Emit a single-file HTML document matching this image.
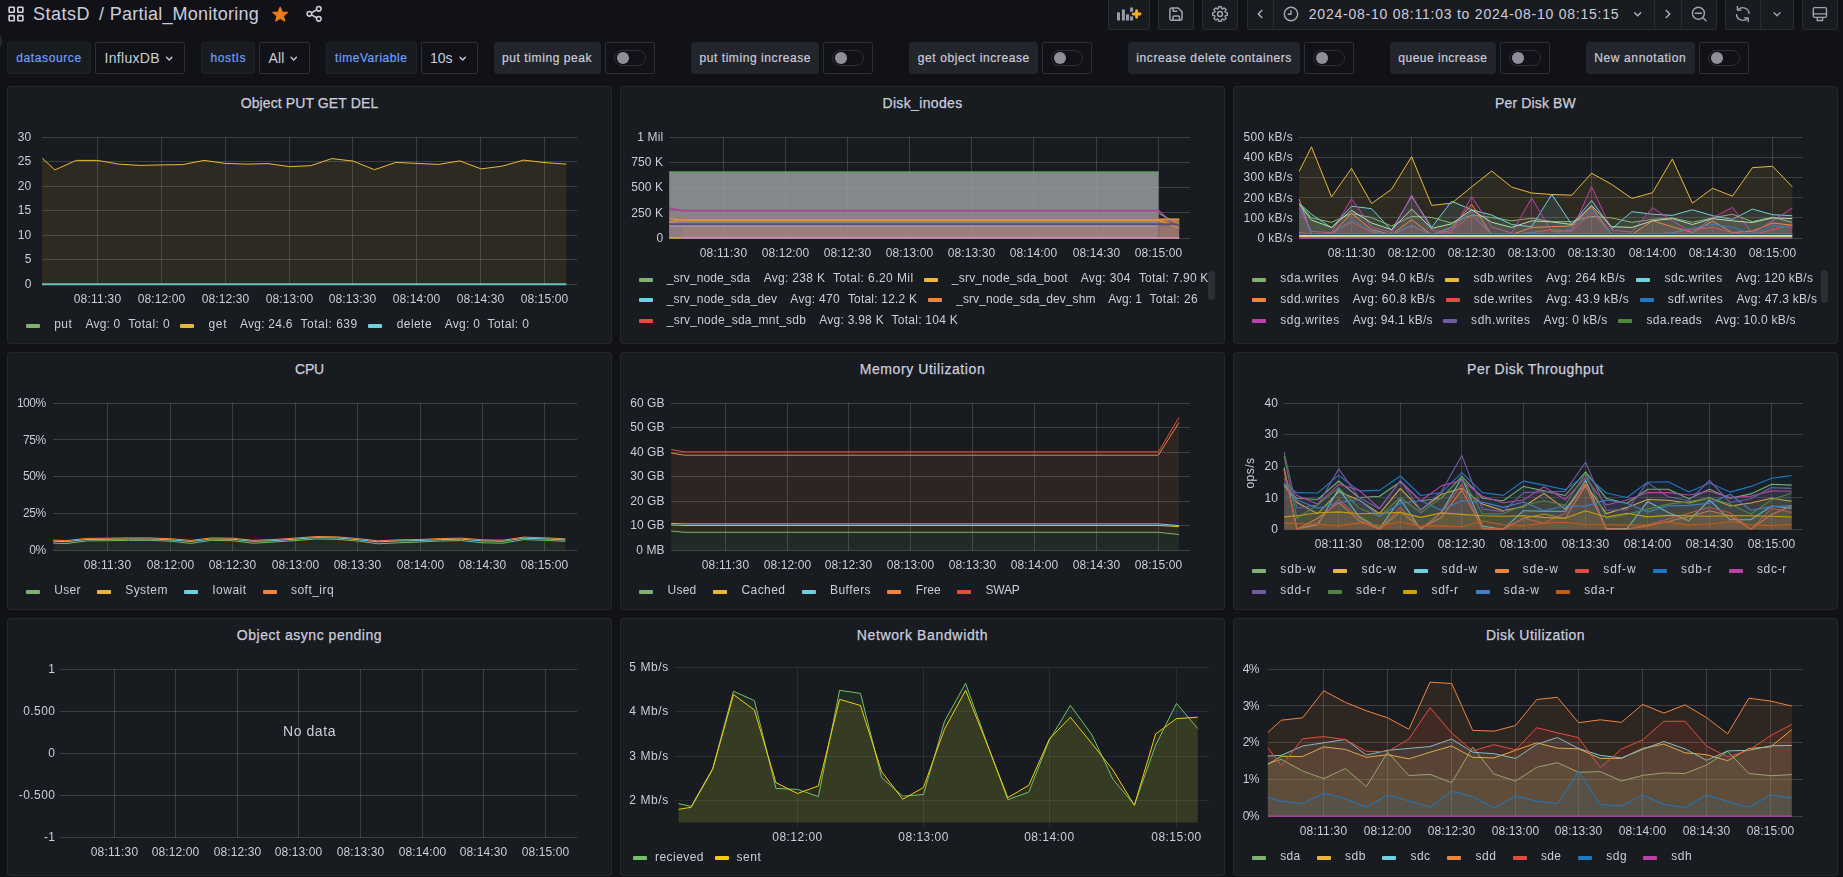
<!DOCTYPE html>
<html><head><meta charset="utf-8"><title>StatsD / Partial_Monitoring</title>
<style>
html,body{margin:0;padding:0;background:#111217;}
body{width:1843px;height:877px;overflow:hidden;position:relative;font-family:"Liberation Sans",sans-serif;color:#ccccdc;}
#gs{position:absolute;left:0;top:0;width:1843px;height:877px;will-change:transform;z-index:5;}
.t{position:absolute;white-space:nowrap;z-index:3;}
.p{position:absolute;background:#181b1f;border:1px solid #25272c;border-radius:3px;z-index:1;}
.sw{position:absolute;height:4px;border-radius:1px;z-index:3;}
.b{position:absolute;box-sizing:border-box;z-index:1;}
svg.main{position:absolute;left:0;top:0;z-index:2;}
svg.ic{position:absolute;z-index:3;overflow:visible;}
</style></head><body>
<div class="b" style="left:1108.0px;top:-2px;width:42.0px;height:32px;background:#181b1f;border:1px solid #2a2c32;border-radius:2px"></div>
<div class="b" style="left:1158.0px;top:-2px;width:36.0px;height:32px;background:#181b1f;border:1px solid #2a2c32;border-radius:2px"></div>
<div class="b" style="left:1202.0px;top:-2px;width:36.0px;height:32px;background:#181b1f;border:1px solid #2a2c32;border-radius:2px"></div>
<div class="b" style="left:1247.0px;top:-2px;width:470.0px;height:32px;background:#181b1f;border:1px solid #2a2c32;border-radius:2px"></div>
<div class="b" style="left:1725.0px;top:-2px;width:69.0px;height:32px;background:#181b1f;border:1px solid #2a2c32;border-radius:2px"></div>
<div class="b" style="left:1802.0px;top:-2px;width:36.0px;height:32px;background:#181b1f;border:1px solid #2a2c32;border-radius:2px"></div>
<div class="b" style="left:7.0px;top:42px;width:84.0px;height:32px;background:#181b1f;border:1px solid #202226;border-radius:2px"></div>
<div class="b" style="left:95.0px;top:42px;width:90.0px;height:32px;background:#111217;border:1px solid #2c2e33;border-radius:2px"></div>
<div class="b" style="left:201.0px;top:42px;width:54.0px;height:32px;background:#181b1f;border:1px solid #202226;border-radius:2px"></div>
<div class="b" style="left:259.0px;top:42px;width:51.0px;height:32px;background:#111217;border:1px solid #2c2e33;border-radius:2px"></div>
<div class="b" style="left:326.0px;top:42px;width:91.0px;height:32px;background:#181b1f;border:1px solid #202226;border-radius:2px"></div>
<div class="b" style="left:421.0px;top:42px;width:57.0px;height:32px;background:#111217;border:1px solid #2c2e33;border-radius:2px"></div>
<div class="b" style="left:494.0px;top:42px;width:107.0px;height:32px;background:#22252b;border:1px solid #22252b;border-radius:3px"></div>
<div class="b" style="left:605.0px;top:42px;width:50.0px;height:32px;background:#111217;border:1px solid #2c2e33;border-radius:2px"></div>
<div class="b" style="left:691.0px;top:42px;width:128.0px;height:32px;background:#22252b;border:1px solid #22252b;border-radius:3px"></div>
<div class="b" style="left:823.0px;top:42px;width:50.0px;height:32px;background:#111217;border:1px solid #2c2e33;border-radius:2px"></div>
<div class="b" style="left:909.0px;top:42px;width:129.0px;height:32px;background:#22252b;border:1px solid #22252b;border-radius:3px"></div>
<div class="b" style="left:1042.0px;top:42px;width:50.0px;height:32px;background:#111217;border:1px solid #2c2e33;border-radius:2px"></div>
<div class="b" style="left:1128.0px;top:42px;width:172.0px;height:32px;background:#22252b;border:1px solid #22252b;border-radius:3px"></div>
<div class="b" style="left:1304.0px;top:42px;width:50.0px;height:32px;background:#111217;border:1px solid #2c2e33;border-radius:2px"></div>
<div class="b" style="left:1390.0px;top:42px;width:106.0px;height:32px;background:#22252b;border:1px solid #22252b;border-radius:3px"></div>
<div class="b" style="left:1500.0px;top:42px;width:50.0px;height:32px;background:#111217;border:1px solid #2c2e33;border-radius:2px"></div>
<div class="b" style="left:1586.0px;top:42px;width:109.0px;height:32px;background:#22252b;border:1px solid #22252b;border-radius:3px"></div>
<div class="b" style="left:1699.0px;top:42px;width:50.0px;height:32px;background:#111217;border:1px solid #2c2e33;border-radius:2px"></div>
<div class="p" style="left:7px;top:86px;width:603px;height:256px"></div>
<div class="sw" style="left:26px;top:324px;width:14px;background:#7EB26D"></div>
<div class="sw" style="left:180px;top:324px;width:14px;background:#EAB839"></div>
<div class="sw" style="left:368px;top:324px;width:14px;background:#6ED0E0"></div>
<div class="p" style="left:620px;top:86px;width:603px;height:256px"></div>
<div class="sw" style="left:639px;top:278px;width:14px;background:#7EB26D"></div>
<div class="sw" style="left:924px;top:278px;width:14px;background:#EAB839"></div>
<div class="sw" style="left:639px;top:298px;width:14px;background:#6ED0E0"></div>
<div class="sw" style="left:928px;top:298px;width:14px;background:#EF843C"></div>
<div class="sw" style="left:639px;top:319px;width:14px;background:#E24D42"></div>
<div class="b" style="left:1208.3px;top:270.8px;width:7px;height:29px;background:#2c2e33;border-radius:4px;z-index:4"></div>
<div class="p" style="left:1233px;top:86px;width:603px;height:256px"></div>
<div class="sw" style="left:1252px;top:278px;width:14px;background:#7EB26D"></div>
<div class="sw" style="left:1445px;top:278px;width:14px;background:#EAB839"></div>
<div class="sw" style="left:1636px;top:278px;width:14px;background:#6ED0E0"></div>
<div class="sw" style="left:1252px;top:298px;width:14px;background:#EF843C"></div>
<div class="sw" style="left:1446px;top:298px;width:14px;background:#E24D42"></div>
<div class="sw" style="left:1640px;top:298px;width:14px;background:#1F78C1"></div>
<div class="sw" style="left:1252px;top:319px;width:14px;background:#BA43A9"></div>
<div class="sw" style="left:1443px;top:319px;width:14px;background:#705DA0"></div>
<div class="sw" style="left:1618px;top:319px;width:14px;background:#508642"></div>
<div class="b" style="left:1821.3px;top:270.2px;width:7px;height:33px;background:#2c2e33;border-radius:4px;z-index:4"></div>
<div class="p" style="left:7px;top:352px;width:603px;height:256px"></div>
<div class="sw" style="left:26px;top:590px;width:14px;background:#7EB26D"></div>
<div class="sw" style="left:97px;top:590px;width:14px;background:#EAB839"></div>
<div class="sw" style="left:184px;top:590px;width:14px;background:#6ED0E0"></div>
<div class="sw" style="left:263px;top:590px;width:14px;background:#EF843C"></div>
<div class="p" style="left:620px;top:352px;width:603px;height:256px"></div>
<div class="sw" style="left:639px;top:590px;width:14px;background:#7EB26D"></div>
<div class="sw" style="left:713px;top:590px;width:14px;background:#EAB839"></div>
<div class="sw" style="left:802px;top:590px;width:14px;background:#6ED0E0"></div>
<div class="sw" style="left:887px;top:590px;width:14px;background:#EF843C"></div>
<div class="sw" style="left:957px;top:590px;width:14px;background:#E24D42"></div>
<div class="p" style="left:1233px;top:352px;width:603px;height:256px"></div>
<div class="sw" style="left:1252px;top:569px;width:14px;background:#7EB26D"></div>
<div class="sw" style="left:1333px;top:569px;width:14px;background:#EAB839"></div>
<div class="sw" style="left:1414px;top:569px;width:14px;background:#6ED0E0"></div>
<div class="sw" style="left:1495px;top:569px;width:14px;background:#EF843C"></div>
<div class="sw" style="left:1575px;top:569px;width:14px;background:#E24D42"></div>
<div class="sw" style="left:1653px;top:569px;width:14px;background:#1F78C1"></div>
<div class="sw" style="left:1729px;top:569px;width:14px;background:#BA43A9"></div>
<div class="sw" style="left:1252px;top:590px;width:14px;background:#705DA0"></div>
<div class="sw" style="left:1328px;top:590px;width:14px;background:#508642"></div>
<div class="sw" style="left:1403px;top:590px;width:14px;background:#CCA300"></div>
<div class="sw" style="left:1476px;top:590px;width:14px;background:#447EBC"></div>
<div class="sw" style="left:1556px;top:590px;width:14px;background:#C15C17"></div>
<div class="p" style="left:7px;top:618px;width:603px;height:256px"></div>
<div class="p" style="left:620px;top:618px;width:603px;height:256px"></div>
<div class="sw" style="left:633px;top:856px;width:14px;background:#73BF69"></div>
<div class="sw" style="left:715px;top:856px;width:14px;background:#F2CC0C"></div>
<div class="p" style="left:1233px;top:618px;width:603px;height:256px"></div>
<div class="sw" style="left:1252px;top:856px;width:14px;background:#7EB26D"></div>
<div class="sw" style="left:1317px;top:856px;width:14px;background:#EAB839"></div>
<div class="sw" style="left:1382px;top:856px;width:14px;background:#6ED0E0"></div>
<div class="sw" style="left:1447px;top:856px;width:14px;background:#EF843C"></div>
<div class="sw" style="left:1513px;top:856px;width:14px;background:#E24D42"></div>
<div class="sw" style="left:1578px;top:856px;width:14px;background:#1F78C1"></div>
<div class="sw" style="left:1643px;top:856px;width:14px;background:#BA43A9"></div>
<div class="b" style="left:-22px;top:29px;width:24px;height:24px;border-radius:50%;background:#24272e;border:1px solid #2c2f36"></div>
<svg class="main" width="1843" height="877" viewBox="0 0 1843 877">
<rect x="9.15" y="7.2" width="5.1" height="5.1" rx="0.5" fill="none" stroke="#d0d0de" stroke-width="1.65"/>
<rect x="17.8" y="7.2" width="5.1" height="5.1" rx="0.5" fill="none" stroke="#d0d0de" stroke-width="1.65"/>
<rect x="9.15" y="15.65" width="5.1" height="5.1" rx="0.5" fill="none" stroke="#d0d0de" stroke-width="1.65"/>
<rect x="17.8" y="15.65" width="5.1" height="5.1" rx="0.5" fill="none" stroke="#d0d0de" stroke-width="1.65"/>
<polygon points="280.20,7.20 282.20,12.05 287.43,12.45 283.43,15.85 284.67,20.95 280.20,18.20 275.73,20.95 276.97,15.85 272.97,12.45 278.20,12.05" fill="#eb7b18" stroke="#eb7b18" stroke-width="1.2" stroke-linejoin="round"/>
<g fill="none" stroke="#ccccdc" stroke-width="1.55"><circle cx="318.8" cy="8.8" r="2.3"/><circle cx="318.8" cy="18.8" r="2.3"/><circle cx="309.4" cy="13.8" r="2.3"/><line x1="311.5" y1="12.700000000000001" x2="316.7" y2="9.9"/><line x1="311.5" y1="14.9" x2="316.7" y2="17.7"/></g>
<line x1="1273.50" y1="-2.00" x2="1273.50" y2="29.00" stroke="#2a2c32" stroke-width="1"/>
<line x1="1654.50" y1="-2.00" x2="1654.50" y2="29.00" stroke="#2a2c32" stroke-width="1"/>
<line x1="1681.50" y1="-2.00" x2="1681.50" y2="29.00" stroke="#2a2c32" stroke-width="1"/>
<line x1="1760.50" y1="-2.00" x2="1760.50" y2="29.00" stroke="#2a2c32" stroke-width="1"/>
<rect x="1117.0" y="12.2" width="3.0" height="8.3" fill="#9a9aa8" rx="0.3"/>
<rect x="1121.9" y="9.5" width="3.0" height="11.0" fill="#9a9aa8" rx="0.3"/>
<rect x="1126.0" y="14.3" width="3.0" height="6.2" fill="#9a9aa8" rx="0.3"/>
<rect x="1130.1" y="7.4" width="3.0" height="13.1" fill="#9a9aa8" rx="0.3"/>
<path d="M1132.1999999999998,14.0 H1141.0 M1136.6,9.7 V18.3" stroke="#181b1f" stroke-width="5.2" stroke-linecap="round" fill="none"/>
<path d="M1133.1999999999998,14.0 H1140.0 M1136.6,10.7 V17.3" stroke="#f7a928" stroke-width="2.9" stroke-linecap="round" fill="none"/>
<g fill="none" stroke="#a2a2b0" stroke-width="1.5" stroke-linejoin="round"><path d="M1169.9,9.7 a1.7,1.7 0 0 1 1.7,-1.7 h6.6 l3.9,3.9 v6.6 a1.7,1.7 0 0 1 -1.7,1.7 h-8.8 a1.7,1.7 0 0 1 -1.7,-1.7 z"/><path d="M1173.1,20.1 v-3.4 a0.8,0.8 0 0 1 0.8,-0.8 h4.8 a0.8,0.8 0 0 1 0.8,0.8 v3.4"/><path d="M1173.1,8.1 v2.6 a0.6,0.6 0 0 0 0.6,0.6 h3.6"/></g>
<polygon points="1227.27,12.60 1227.27,15.40 1225.35,15.65 1224.95,16.61 1226.13,18.15 1224.15,20.13 1222.61,18.95 1221.65,19.35 1221.40,21.27 1218.60,21.27 1218.35,19.35 1217.39,18.95 1215.85,20.13 1213.87,18.15 1215.05,16.61 1214.65,15.65 1212.73,15.40 1212.73,12.60 1214.65,12.35 1215.05,11.39 1213.87,9.85 1215.85,7.87 1217.39,9.05 1218.35,8.65 1218.60,6.73 1221.40,6.73 1221.65,8.65 1222.61,9.05 1224.15,7.87 1226.13,9.85 1224.95,11.39 1225.35,12.35" fill="none" stroke="#a2a2b0" stroke-width="1.4" stroke-linejoin="round"/>
<circle cx="1220" cy="14" r="2.5" fill="none" stroke="#a2a2b0" stroke-width="1.4"/>
<polyline points="1261.8,10.4 1258.2,14 1261.8,17.6" fill="none" stroke="#b4b4c2" stroke-width="1.4" stroke-linecap="round" stroke-linejoin="round"/>
<circle cx="1291" cy="14" r="6.7" fill="none" stroke="#a8a8b6" stroke-width="1.4"/>
<polyline points="1291,10.6 1291,14.3 1288.2,14.3" fill="none" stroke="#a8a8b6" stroke-width="1.4" stroke-linecap="round" stroke-linejoin="round"/>
<polyline points="1634.6,12.7 1637.6,15.7 1640.6,12.7" fill="none" stroke="#b4b4c2" stroke-width="1.4" stroke-linecap="round" stroke-linejoin="round"/>
<polyline points="1666.2,10.4 1669.8,14 1666.2,17.6" fill="none" stroke="#b4b4c2" stroke-width="1.4" stroke-linecap="round" stroke-linejoin="round"/>
<circle cx="1698.4" cy="13.2" r="6.0" fill="none" stroke="#a2a2b0" stroke-width="1.4"/>
<line x1="1702.9" y1="17.7" x2="1706.0" y2="20.7" stroke="#a2a2b0" stroke-width="1.4" stroke-linecap="round"/>
<line x1="1695.4" y1="13.2" x2="1701.4" y2="13.2" stroke="#a2a2b0" stroke-width="1.4" stroke-linecap="round"/>
<g fill="none" stroke="#a2a2b0" stroke-width="1.4" stroke-linecap="round" stroke-linejoin="round"><path d="M1749.1,13.4 A6.3,6.3 0 0 0 1738.3,9.6"/><polyline points="1737.3999999999999,6.4 1737.3999999999999,10.1 1741.1,10.1"/><path d="M1736.5,14.6 A6.3,6.3 0 0 0 1747.3,18.4"/><polyline points="1748.2,21.6 1748.2,17.9 1744.5,17.9"/></g>
<polyline points="1774.0,12.7 1777,15.7 1780.0,12.7" fill="none" stroke="#a2a2b0" stroke-width="1.4" stroke-linecap="round" stroke-linejoin="round"/>
<g fill="none" stroke="#a2a2b0" stroke-width="1.4" stroke-linejoin="round" stroke-linecap="round"><rect x="1813.3" y="7.6" width="13.2" height="9.8" rx="1.4"/><line x1="1813.3" y1="13.9" x2="1826.5" y2="13.9"/><path d="M1817.2,17.6 v2.9 h5.4 v-2.9"/></g>
<polyline points="166.5,57.25 169.2,59.95 171.89999999999998,57.25" fill="none" stroke="#ccccdc" stroke-width="1.3" stroke-linecap="round" stroke-linejoin="round"/>
<polyline points="291.0,57.25 293.7,59.95 296.4,57.25" fill="none" stroke="#ccccdc" stroke-width="1.3" stroke-linecap="round" stroke-linejoin="round"/>
<polyline points="460.0,57.25 462.7,59.95 465.4,57.25" fill="none" stroke="#ccccdc" stroke-width="1.3" stroke-linecap="round" stroke-linejoin="round"/>
<rect x="614.5" y="50.5" width="31" height="15" rx="7.5" fill="#111217" stroke="#2d2f36" stroke-width="1"/>
<circle cx="623.0" cy="58" r="6.05" fill="#8f8f9c"/>
<rect x="832.5" y="50.5" width="31" height="15" rx="7.5" fill="#111217" stroke="#2d2f36" stroke-width="1"/>
<circle cx="841.0" cy="58" r="6.05" fill="#8f8f9c"/>
<rect x="1051.5" y="50.5" width="31" height="15" rx="7.5" fill="#111217" stroke="#2d2f36" stroke-width="1"/>
<circle cx="1060.0" cy="58" r="6.05" fill="#8f8f9c"/>
<rect x="1313.5" y="50.5" width="31" height="15" rx="7.5" fill="#111217" stroke="#2d2f36" stroke-width="1"/>
<circle cx="1322.0" cy="58" r="6.05" fill="#8f8f9c"/>
<rect x="1509.5" y="50.5" width="31" height="15" rx="7.5" fill="#111217" stroke="#2d2f36" stroke-width="1"/>
<circle cx="1518.0" cy="58" r="6.05" fill="#8f8f9c"/>
<rect x="1708.5" y="50.5" width="31" height="15" rx="7.5" fill="#111217" stroke="#2d2f36" stroke-width="1"/>
<circle cx="1717.0" cy="58" r="6.05" fill="#8f8f9c"/>
<line x1="42.00" y1="137.50" x2="577.00" y2="137.50" stroke="#fff" stroke-width="1" stroke-opacity="0.155"/>
<line x1="42.00" y1="161.50" x2="577.00" y2="161.50" stroke="#fff" stroke-width="1" stroke-opacity="0.155"/>
<line x1="42.00" y1="186.50" x2="577.00" y2="186.50" stroke="#fff" stroke-width="1" stroke-opacity="0.155"/>
<line x1="42.00" y1="210.50" x2="577.00" y2="210.50" stroke="#fff" stroke-width="1" stroke-opacity="0.155"/>
<line x1="42.00" y1="235.50" x2="577.00" y2="235.50" stroke="#fff" stroke-width="1" stroke-opacity="0.155"/>
<line x1="42.00" y1="259.50" x2="577.00" y2="259.50" stroke="#fff" stroke-width="1" stroke-opacity="0.155"/>
<line x1="42.00" y1="284.50" x2="577.00" y2="284.50" stroke="#fff" stroke-width="1" stroke-opacity="0.155"/>
<line x1="97.50" y1="137.00" x2="97.50" y2="285.00" stroke="#fff" stroke-width="1" stroke-opacity="0.155"/>
<line x1="161.50" y1="137.00" x2="161.50" y2="285.00" stroke="#fff" stroke-width="1" stroke-opacity="0.155"/>
<line x1="225.50" y1="137.00" x2="225.50" y2="285.00" stroke="#fff" stroke-width="1" stroke-opacity="0.155"/>
<line x1="289.50" y1="137.00" x2="289.50" y2="285.00" stroke="#fff" stroke-width="1" stroke-opacity="0.155"/>
<line x1="352.50" y1="137.00" x2="352.50" y2="285.00" stroke="#fff" stroke-width="1" stroke-opacity="0.155"/>
<line x1="416.50" y1="137.00" x2="416.50" y2="285.00" stroke="#fff" stroke-width="1" stroke-opacity="0.155"/>
<line x1="480.50" y1="137.00" x2="480.50" y2="285.00" stroke="#fff" stroke-width="1" stroke-opacity="0.155"/>
<line x1="544.50" y1="137.00" x2="544.50" y2="285.00" stroke="#fff" stroke-width="1" stroke-opacity="0.155"/>
<polygon points="42.2,158.1 54.9,169.9 76.2,160.4 97.5,160.4 118.8,164.1 140.1,165.4 161.4,164.9 182.7,164.6 204.1,160.4 225.4,163.4 246.7,164.1 268.0,163.6 289.3,166.6 310.6,165.7 331.9,158.6 353.2,161.1 374.5,169.7 395.8,162.4 417.1,163.4 438.5,164.4 459.8,160.9 481.1,168.9 502.4,166.1 523.7,160.1 545.0,162.6 566.3,164.1 566.3,284.5 42.2,284.5" fill="#EAB839" fill-opacity="0.1"/>
<polyline points="42.2,158.1 54.9,169.9 76.2,160.4 97.5,160.4 118.8,164.1 140.1,165.4 161.4,164.9 182.7,164.6 204.1,160.4 225.4,163.4 246.7,164.1 268.0,163.6 289.3,166.6 310.6,165.7 331.9,158.6 353.2,161.1 374.5,169.7 395.8,162.4 417.1,163.4 438.5,164.4 459.8,160.9 481.1,168.9 502.4,166.1 523.7,160.1 545.0,162.6 566.3,164.1" fill="none" stroke="#EAB839" stroke-width="1.0" stroke-linejoin="round"/>
<line x1="42.00" y1="284.20" x2="566.32" y2="284.20" stroke="#6ebeb9" stroke-width="1.9"/>
<line x1="669.00" y1="137.50" x2="1190.00" y2="137.50" stroke="#fff" stroke-width="1" stroke-opacity="0.155"/>
<line x1="669.00" y1="162.50" x2="1190.00" y2="162.50" stroke="#fff" stroke-width="1" stroke-opacity="0.155"/>
<line x1="669.00" y1="187.50" x2="1190.00" y2="187.50" stroke="#fff" stroke-width="1" stroke-opacity="0.155"/>
<line x1="669.00" y1="212.50" x2="1190.00" y2="212.50" stroke="#fff" stroke-width="1" stroke-opacity="0.155"/>
<line x1="669.00" y1="238.50" x2="1190.00" y2="238.50" stroke="#fff" stroke-width="1" stroke-opacity="0.155"/>
<line x1="723.50" y1="137.00" x2="723.50" y2="239.00" stroke="#fff" stroke-width="1" stroke-opacity="0.155"/>
<line x1="785.50" y1="137.00" x2="785.50" y2="239.00" stroke="#fff" stroke-width="1" stroke-opacity="0.155"/>
<line x1="847.50" y1="137.00" x2="847.50" y2="239.00" stroke="#fff" stroke-width="1" stroke-opacity="0.155"/>
<line x1="909.50" y1="137.00" x2="909.50" y2="239.00" stroke="#fff" stroke-width="1" stroke-opacity="0.155"/>
<line x1="971.50" y1="137.00" x2="971.50" y2="239.00" stroke="#fff" stroke-width="1" stroke-opacity="0.155"/>
<line x1="1033.50" y1="137.00" x2="1033.50" y2="239.00" stroke="#fff" stroke-width="1" stroke-opacity="0.155"/>
<line x1="1096.50" y1="137.00" x2="1096.50" y2="239.00" stroke="#fff" stroke-width="1" stroke-opacity="0.155"/>
<line x1="1158.50" y1="137.00" x2="1158.50" y2="239.00" stroke="#fff" stroke-width="1" stroke-opacity="0.155"/>
<rect x="669.20" y="171.40" width="489.40" height="39.30" fill="#84888b"/>
<rect x="669.20" y="210.70" width="489.40" height="9.00" fill="#8c8189"/>
<rect x="669.20" y="219.70" width="489.40" height="6.30" fill="#93808a"/>
<rect x="669.20" y="225.50" width="489.40" height="1.60" fill="#a18d9e"/>
<rect x="669.20" y="227.00" width="489.40" height="11.20" fill="#9a7f7c"/>
<rect x="669.20" y="227.00" width="13.00" height="11.20" fill="#8f7b80"/>
<line x1="669.20" y1="187.50" x2="1158.60" y2="187.50" stroke="#fff" stroke-width="1" stroke-opacity="0.05"/>
<line x1="723.50" y1="173.00" x2="723.50" y2="238.00" stroke="#fff" stroke-width="1" stroke-opacity="0.045"/>
<line x1="785.50" y1="173.00" x2="785.50" y2="238.00" stroke="#fff" stroke-width="1" stroke-opacity="0.045"/>
<line x1="847.50" y1="173.00" x2="847.50" y2="238.00" stroke="#fff" stroke-width="1" stroke-opacity="0.045"/>
<line x1="909.50" y1="173.00" x2="909.50" y2="238.00" stroke="#fff" stroke-width="1" stroke-opacity="0.045"/>
<line x1="971.50" y1="173.00" x2="971.50" y2="238.00" stroke="#fff" stroke-width="1" stroke-opacity="0.045"/>
<line x1="1033.50" y1="173.00" x2="1033.50" y2="238.00" stroke="#fff" stroke-width="1" stroke-opacity="0.045"/>
<line x1="1096.50" y1="173.00" x2="1096.50" y2="238.00" stroke="#fff" stroke-width="1" stroke-opacity="0.045"/>
<polygon points="1158.6,218.4 1179.2,218.4 1179.2,238.2 1158.6,238.2" fill="#957469"/>
<polygon points="1158.6,218.4 1179.2,218.4 1179.2,222.5 1158.6,222.5" fill="#b5713f"/>
<polygon points="1158.6,222.5 1179.2,222.5 1179.2,227.0 1158.6,227.0" fill="#8d6c62"/>
<line x1="669.20" y1="172.40" x2="1158.60" y2="172.40" stroke="#62a05f" stroke-width="1.2"/>
<polyline points="669.2,208.2 682.2,210.7 1158.6,210.7 1179.2,229.6" fill="none" stroke="#a4458f" stroke-width="1.8" stroke-linejoin="round"/>
<polyline points="669.2,218.5 682.2,220.4 1158.6,220.4 1179.2,228.2" fill="none" stroke="#d9a233" stroke-width="1.2" stroke-linejoin="round"/>
<polyline points="669.2,222.5 682.2,219.6 1158.6,219.6 1179.2,219.6" fill="none" stroke="#dd8a3a" stroke-width="1.3" stroke-linejoin="round"/>
<polyline points="669.2,224.2 1158.6,224.2 1179.2,224.4" fill="none" stroke="#534c84" stroke-width="1.8" stroke-linejoin="round"/>
<polyline points="1158.6,213.5 1179.2,224.0" fill="none" stroke="#8bb374" stroke-width="0.8" stroke-linejoin="round"/>
<line x1="669.20" y1="238.00" x2="682.20" y2="238.00" stroke="#e0b43a" stroke-width="1.4"/>
<line x1="682.20" y1="238.00" x2="1179.20" y2="238.00" stroke="#dc92cb" stroke-width="1.4"/>
<line x1="1299.00" y1="137.50" x2="1803.00" y2="137.50" stroke="#fff" stroke-width="1" stroke-opacity="0.155"/>
<line x1="1299.00" y1="157.50" x2="1803.00" y2="157.50" stroke="#fff" stroke-width="1" stroke-opacity="0.155"/>
<line x1="1299.00" y1="177.50" x2="1803.00" y2="177.50" stroke="#fff" stroke-width="1" stroke-opacity="0.155"/>
<line x1="1299.00" y1="197.50" x2="1803.00" y2="197.50" stroke="#fff" stroke-width="1" stroke-opacity="0.155"/>
<line x1="1299.00" y1="217.50" x2="1803.00" y2="217.50" stroke="#fff" stroke-width="1" stroke-opacity="0.155"/>
<line x1="1299.00" y1="238.50" x2="1803.00" y2="238.50" stroke="#fff" stroke-width="1" stroke-opacity="0.155"/>
<line x1="1351.50" y1="137.00" x2="1351.50" y2="239.00" stroke="#fff" stroke-width="1" stroke-opacity="0.155"/>
<line x1="1411.50" y1="137.00" x2="1411.50" y2="239.00" stroke="#fff" stroke-width="1" stroke-opacity="0.155"/>
<line x1="1471.50" y1="137.00" x2="1471.50" y2="239.00" stroke="#fff" stroke-width="1" stroke-opacity="0.155"/>
<line x1="1531.50" y1="137.00" x2="1531.50" y2="239.00" stroke="#fff" stroke-width="1" stroke-opacity="0.155"/>
<line x1="1591.50" y1="137.00" x2="1591.50" y2="239.00" stroke="#fff" stroke-width="1" stroke-opacity="0.155"/>
<line x1="1652.50" y1="137.00" x2="1652.50" y2="239.00" stroke="#fff" stroke-width="1" stroke-opacity="0.155"/>
<line x1="1712.50" y1="137.00" x2="1712.50" y2="239.00" stroke="#fff" stroke-width="1" stroke-opacity="0.155"/>
<line x1="1772.50" y1="137.00" x2="1772.50" y2="239.00" stroke="#fff" stroke-width="1" stroke-opacity="0.155"/>
<polygon points="1299.1,203.2 1311.5,217.9 1331.5,222.3 1351.5,213.5 1371.6,217.6 1391.5,226.0 1411.6,216.4 1431.7,217.5 1451.6,223.0 1471.7,215.0 1491.7,217.5 1511.7,220.8 1531.7,218.2 1551.8,221.6 1571.8,221.6 1591.6,216.4 1611.8,217.9 1631.9,222.3 1652.5,219.4 1672.3,217.9 1692.4,222.3 1712.6,217.9 1732.4,214.2 1752.4,221.6 1772.6,217.2 1792.3,222.3 1792.3,238.5 1299.1,238.5" fill="#7EB26D" fill-opacity="0.1"/>
<polyline points="1299.1,203.2 1311.5,217.9 1331.5,222.3 1351.5,213.5 1371.6,217.6 1391.5,226.0 1411.6,216.4 1431.7,217.5 1451.6,223.0 1471.7,215.0 1491.7,217.5 1511.7,220.8 1531.7,218.2 1551.8,221.6 1571.8,221.6 1591.6,216.4 1611.8,217.9 1631.9,222.3 1652.5,219.4 1672.3,217.9 1692.4,222.3 1712.6,217.9 1732.4,214.2 1752.4,221.6 1772.6,217.2 1792.3,222.3" fill="none" stroke="#7EB26D" stroke-width="1.0" stroke-linejoin="round"/>
<polygon points="1299.1,171.5 1311.5,146.8 1331.5,196.8 1351.5,168.4 1371.6,203.5 1391.5,189.3 1411.6,156.7 1431.7,205.4 1451.6,203.2 1471.7,186.8 1491.7,171.0 1511.7,187.1 1531.7,193.0 1551.8,194.5 1571.8,195.2 1591.6,173.2 1611.8,184.5 1631.9,198.4 1652.5,192.7 1672.3,159.0 1692.4,203.2 1712.6,188.3 1732.4,196.2 1752.4,167.7 1772.6,166.3 1792.3,186.8 1792.3,238.5 1299.1,238.5" fill="#EAB839" fill-opacity="0.1"/>
<polyline points="1299.1,171.5 1311.5,146.8 1331.5,196.8 1351.5,168.4 1371.6,203.5 1391.5,189.3 1411.6,156.7 1431.7,205.4 1451.6,203.2 1471.7,186.8 1491.7,171.0 1511.7,187.1 1531.7,193.0 1551.8,194.5 1571.8,195.2 1591.6,173.2 1611.8,184.5 1631.9,198.4 1652.5,192.7 1672.3,159.0 1692.4,203.2 1712.6,188.3 1732.4,196.2 1752.4,167.7 1772.6,166.3 1792.3,186.8" fill="none" stroke="#EAB839" stroke-width="1.0" stroke-linejoin="round"/>
<polygon points="1299.1,203.2 1311.5,214.2 1331.5,227.9 1351.5,206.2 1371.6,208.7 1391.5,230.4 1411.6,196.2 1431.7,227.4 1451.6,201.3 1471.7,209.8 1491.7,215.0 1511.7,224.5 1531.7,226.7 1551.8,194.5 1571.8,224.5 1591.6,200.3 1611.8,228.9 1631.9,211.7 1652.5,214.2 1672.3,215.4 1692.4,209.8 1712.6,215.7 1732.4,219.4 1752.4,209.1 1772.6,214.7 1792.3,215.7 1792.3,238.5 1299.1,238.5" fill="#6ED0E0" fill-opacity="0.1"/>
<polyline points="1299.1,203.2 1311.5,214.2 1331.5,227.9 1351.5,206.2 1371.6,208.7 1391.5,230.4 1411.6,196.2 1431.7,227.4 1451.6,201.3 1471.7,209.8 1491.7,215.0 1511.7,224.5 1531.7,226.7 1551.8,194.5 1571.8,224.5 1591.6,200.3 1611.8,228.9 1631.9,211.7 1652.5,214.2 1672.3,215.4 1692.4,209.8 1712.6,215.7 1732.4,219.4 1752.4,209.1 1772.6,214.7 1792.3,215.7" fill="none" stroke="#6ED0E0" stroke-width="1.0" stroke-linejoin="round"/>
<polygon points="1299.1,198.9 1311.5,234.6 1331.5,234.6 1351.5,213.2 1371.6,229.6 1391.5,234.6 1411.6,219.7 1431.7,234.6 1451.6,227.4 1471.7,204.3 1491.7,234.6 1511.7,234.6 1531.7,227.4 1551.8,226.7 1571.8,226.0 1591.6,206.9 1611.8,234.6 1631.9,234.6 1652.5,220.8 1672.3,226.7 1692.4,232.5 1712.6,221.1 1732.4,232.5 1752.4,231.1 1772.6,223.0 1792.3,225.2 1792.3,238.5 1299.1,238.5" fill="#EF843C" fill-opacity="0.1"/>
<polyline points="1299.1,198.9 1311.5,234.6 1331.5,234.6 1351.5,213.2 1371.6,229.6 1391.5,234.6 1411.6,219.7 1431.7,234.6 1451.6,227.4 1471.7,204.3 1491.7,234.6 1511.7,234.6 1531.7,227.4 1551.8,226.7 1571.8,226.0 1591.6,206.9 1611.8,234.6 1631.9,234.6 1652.5,220.8 1672.3,226.7 1692.4,232.5 1712.6,221.1 1732.4,232.5 1752.4,231.1 1772.6,223.0 1792.3,225.2" fill="none" stroke="#EF843C" stroke-width="1.0" stroke-linejoin="round"/>
<polygon points="1299.1,232.5 1311.5,234.6 1331.5,232.5 1351.5,222.0 1371.6,231.8 1391.5,234.6 1411.6,226.0 1431.7,234.6 1451.6,230.4 1471.7,215.0 1491.7,234.6 1511.7,234.6 1531.7,232.5 1551.8,229.6 1571.8,231.1 1591.6,212.0 1611.8,234.6 1631.9,234.6 1652.5,234.6 1672.3,232.5 1692.4,229.6 1712.6,227.4 1732.4,232.5 1752.4,234.6 1772.6,229.6 1792.3,224.5 1792.3,238.5 1299.1,238.5" fill="#E24D42" fill-opacity="0.1"/>
<polyline points="1299.1,232.5 1311.5,234.6 1331.5,232.5 1351.5,222.0 1371.6,231.8 1391.5,234.6 1411.6,226.0 1431.7,234.6 1451.6,230.4 1471.7,215.0 1491.7,234.6 1511.7,234.6 1531.7,232.5 1551.8,229.6 1571.8,231.1 1591.6,212.0 1611.8,234.6 1631.9,234.6 1652.5,234.6 1672.3,232.5 1692.4,229.6 1712.6,227.4 1732.4,232.5 1752.4,234.6 1772.6,229.6 1792.3,224.5" fill="none" stroke="#E24D42" stroke-width="1.0" stroke-linejoin="round"/>
<polygon points="1299.1,202.5 1311.5,234.6 1331.5,234.6 1351.5,219.4 1371.6,231.1 1391.5,234.6 1411.6,225.2 1431.7,234.6 1451.6,228.2 1471.7,211.3 1491.7,234.6 1511.7,234.6 1531.7,232.5 1551.8,234.6 1571.8,228.2 1591.6,209.1 1611.8,234.6 1631.9,234.6 1652.5,234.6 1672.3,232.5 1692.4,228.2 1712.6,224.5 1732.4,227.1 1752.4,234.6 1772.6,225.2 1792.3,227.4 1792.3,238.5 1299.1,238.5" fill="#1F78C1" fill-opacity="0.1"/>
<polyline points="1299.1,202.5 1311.5,234.6 1331.5,234.6 1351.5,219.4 1371.6,231.1 1391.5,234.6 1411.6,225.2 1431.7,234.6 1451.6,228.2 1471.7,211.3 1491.7,234.6 1511.7,234.6 1531.7,232.5 1551.8,234.6 1571.8,228.2 1591.6,209.1 1611.8,234.6 1631.9,234.6 1652.5,234.6 1672.3,232.5 1692.4,228.2 1712.6,224.5 1732.4,227.1 1752.4,234.6 1772.6,225.2 1792.3,227.4" fill="none" stroke="#1F78C1" stroke-width="1.0" stroke-linejoin="round"/>
<polygon points="1299.1,207.6 1311.5,231.4 1331.5,232.5 1351.5,198.9 1371.6,227.0 1391.5,232.5 1411.6,194.9 1431.7,230.4 1451.6,232.5 1471.7,196.7 1491.7,227.0 1511.7,233.0 1531.7,198.1 1551.8,231.5 1571.8,230.8 1591.6,186.8 1611.8,230.1 1631.9,232.1 1652.5,207.6 1672.3,220.8 1692.4,232.5 1712.6,217.9 1732.4,207.4 1752.4,233.0 1772.6,220.8 1792.3,208.1 1792.3,238.5 1299.1,238.5" fill="#BA43A9" fill-opacity="0.1"/>
<polyline points="1299.1,207.6 1311.5,231.4 1331.5,232.5 1351.5,198.9 1371.6,227.0 1391.5,232.5 1411.6,194.9 1431.7,230.4 1451.6,232.5 1471.7,196.7 1491.7,227.0 1511.7,233.0 1531.7,198.1 1551.8,231.5 1571.8,230.8 1591.6,186.8 1611.8,230.1 1631.9,232.1 1652.5,207.6 1672.3,220.8 1692.4,232.5 1712.6,217.9 1732.4,207.4 1752.4,233.0 1772.6,220.8 1792.3,208.1" fill="none" stroke="#BA43A9" stroke-width="1.0" stroke-linejoin="round"/>
<polygon points="1299.1,204.0 1311.5,220.1 1331.5,227.4 1351.5,210.3 1371.6,223.0 1391.5,229.6 1411.6,209.1 1431.7,228.4 1451.6,223.8 1471.7,209.8 1491.7,222.3 1511.7,227.4 1531.7,220.8 1551.8,221.9 1571.8,224.5 1591.6,205.4 1611.8,226.7 1631.9,227.4 1652.5,220.8 1672.3,218.6 1692.4,224.5 1712.6,218.6 1732.4,220.8 1752.4,222.6 1772.6,217.9 1792.3,218.6 1792.3,238.5 1299.1,238.5" fill="#B7DBAB" fill-opacity="0.1"/>
<polyline points="1299.1,204.0 1311.5,220.1 1331.5,227.4 1351.5,210.3 1371.6,223.0 1391.5,229.6 1411.6,209.1 1431.7,228.4 1451.6,223.8 1471.7,209.8 1491.7,222.3 1511.7,227.4 1531.7,220.8 1551.8,221.9 1571.8,224.5 1591.6,205.4 1611.8,226.7 1631.9,227.4 1652.5,220.8 1672.3,218.6 1692.4,224.5 1712.6,218.6 1732.4,220.8 1752.4,222.6 1772.6,217.9 1792.3,218.6" fill="none" stroke="#B7DBAB" stroke-width="1.0" stroke-linejoin="round"/>
<line x1="1299.20" y1="233.50" x2="1792.27" y2="233.50" stroke="#b9621f" stroke-width="1.0" stroke-opacity="0.85"/>
<line x1="1299.20" y1="234.50" x2="1792.27" y2="234.50" stroke="#2a4f80" stroke-width="1.0"/>
<rect x="1299.20" y="235.00" width="493.07" height="1.00" fill="#ead3a4"/>
<rect x="1299.20" y="236.00" width="493.07" height="1.00" fill="#dcc283"/>
<rect x="1299.20" y="237.00" width="493.07" height="1.90" fill="#865a98"/>
<line x1="53.00" y1="403.50" x2="577.00" y2="403.50" stroke="#fff" stroke-width="1" stroke-opacity="0.155"/>
<line x1="53.00" y1="439.50" x2="577.00" y2="439.50" stroke="#fff" stroke-width="1" stroke-opacity="0.155"/>
<line x1="53.00" y1="476.50" x2="577.00" y2="476.50" stroke="#fff" stroke-width="1" stroke-opacity="0.155"/>
<line x1="53.00" y1="513.50" x2="577.00" y2="513.50" stroke="#fff" stroke-width="1" stroke-opacity="0.155"/>
<line x1="53.00" y1="550.50" x2="577.00" y2="550.50" stroke="#fff" stroke-width="1" stroke-opacity="0.155"/>
<line x1="107.50" y1="403.00" x2="107.50" y2="551.00" stroke="#fff" stroke-width="1" stroke-opacity="0.155"/>
<line x1="170.50" y1="403.00" x2="170.50" y2="551.00" stroke="#fff" stroke-width="1" stroke-opacity="0.155"/>
<line x1="232.50" y1="403.00" x2="232.50" y2="551.00" stroke="#fff" stroke-width="1" stroke-opacity="0.155"/>
<line x1="295.50" y1="403.00" x2="295.50" y2="551.00" stroke="#fff" stroke-width="1" stroke-opacity="0.155"/>
<line x1="357.50" y1="403.00" x2="357.50" y2="551.00" stroke="#fff" stroke-width="1" stroke-opacity="0.155"/>
<line x1="420.50" y1="403.00" x2="420.50" y2="551.00" stroke="#fff" stroke-width="1" stroke-opacity="0.155"/>
<line x1="482.50" y1="403.00" x2="482.50" y2="551.00" stroke="#fff" stroke-width="1" stroke-opacity="0.155"/>
<line x1="544.50" y1="403.00" x2="544.50" y2="551.00" stroke="#fff" stroke-width="1" stroke-opacity="0.155"/>
<polygon points="53.2,543.1 66.0,543.6 86.8,540.9 107.6,540.7 128.4,540.4 149.2,540.4 170.0,541.2 190.8,543.4 211.6,540.4 232.5,540.7 253.3,543.3 274.1,542.0 294.9,540.6 315.7,539.0 336.5,539.3 357.3,541.0 378.1,543.8 398.9,542.8 419.8,542.0 440.6,541.0 461.4,540.6 482.2,542.8 503.0,543.2 523.8,539.6 544.6,540.3 565.4,541.3 565.4,550.5 53.2,550.5" fill="#7EB26D" fill-opacity="0.1"/>
<polygon points="53.2,541.2 66.0,541.7 86.8,539.5 107.6,539.3 128.4,539.0 149.2,539.0 170.0,539.8 190.8,541.5 211.6,539.0 232.5,539.3 253.3,541.4 274.1,540.6 294.9,539.2 315.7,537.6 336.5,537.9 357.3,539.6 378.1,541.9 398.9,540.9 419.8,540.6 440.6,539.6 461.4,539.2 482.2,540.9 503.0,541.3 523.8,538.2 544.6,538.9 565.4,539.9 565.4,541.3 544.6,540.3 523.8,539.6 503.0,543.2 482.2,542.8 461.4,540.6 440.6,541.0 419.8,542.0 398.9,542.8 378.1,543.8 357.3,541.0 336.5,539.3 315.7,539.0 294.9,540.6 274.1,542.0 253.3,543.3 232.5,540.7 211.6,540.4 190.8,543.4 170.0,541.2 149.2,540.4 128.4,540.4 107.6,540.7 86.8,540.9 66.0,543.6 53.2,543.1" fill="#EAB839" fill-opacity="0.1"/>
<polygon points="53.2,541.2 66.0,541.7 86.8,539.5 107.6,539.3 128.4,539.0 149.2,539.0 170.0,539.8 190.8,541.5 211.6,539.0 232.5,539.3 253.3,541.4 274.1,540.6 294.9,539.2 315.7,537.6 336.5,537.9 357.3,539.6 378.1,541.9 398.9,540.9 419.8,540.6 440.6,539.6 461.4,539.2 482.2,540.9 503.0,541.3 523.8,538.2 544.6,538.9 565.4,539.9 565.4,539.9 544.6,538.9 523.8,538.2 503.0,541.3 482.2,540.9 461.4,539.2 440.6,539.6 419.8,540.6 398.9,540.9 378.1,541.9 357.3,539.6 336.5,537.9 315.7,537.6 294.9,539.2 274.1,540.6 253.3,541.4 232.5,539.3 211.6,539.0 190.8,541.5 170.0,539.8 149.2,539.0 128.4,539.0 107.6,539.3 86.8,539.5 66.0,541.7 53.2,541.2" fill="#6ED0E0" fill-opacity="0.1"/>
<polygon points="53.2,540.1 66.0,540.6 86.8,538.4 107.6,538.2 128.4,537.9 149.2,537.9 170.0,538.7 190.8,540.4 211.6,537.9 232.5,538.2 253.3,540.3 274.1,539.5 294.9,538.1 315.7,536.5 336.5,536.8 357.3,538.5 378.1,540.8 398.9,539.8 419.8,539.5 440.6,538.5 461.4,538.1 482.2,539.8 503.0,540.2 523.8,537.1 544.6,537.8 565.4,538.8 565.4,539.9 544.6,538.9 523.8,538.2 503.0,541.3 482.2,540.9 461.4,539.2 440.6,539.6 419.8,540.6 398.9,540.9 378.1,541.9 357.3,539.6 336.5,537.9 315.7,537.6 294.9,539.2 274.1,540.6 253.3,541.4 232.5,539.3 211.6,539.0 190.8,541.5 170.0,539.8 149.2,539.0 128.4,539.0 107.6,539.3 86.8,539.5 66.0,541.7 53.2,541.2" fill="#EF843C" fill-opacity="0.1"/>
<polyline points="53.2,543.1 66.0,543.6 86.8,540.9 107.6,540.7 128.4,540.4 149.2,540.4 170.0,541.2 190.8,543.4 211.6,540.4 232.5,540.7 253.3,543.3 274.1,542.0 294.9,540.6 315.7,539.0 336.5,539.3 357.3,541.0 378.1,543.8 398.9,542.8 419.8,542.0 440.6,541.0 461.4,540.6 482.2,542.8 503.0,543.2 523.8,539.6 544.6,540.3 565.4,541.3" fill="none" stroke="#7EB26D" stroke-width="1.0" stroke-linejoin="round"/>
<polyline points="53.2,541.2 66.0,541.7 86.8,539.5 107.6,539.3 128.4,539.0 149.2,539.0 170.0,539.8 190.8,541.5 211.6,539.0 232.5,539.3 253.3,541.4 274.1,540.6 294.9,539.2 315.7,537.6 336.5,537.9 357.3,539.6 378.1,541.9 398.9,540.9 419.8,540.6 440.6,539.6 461.4,539.2 482.2,540.9 503.0,541.3 523.8,538.2 544.6,538.9 565.4,539.9" fill="none" stroke="#6ED0E0" stroke-width="1.0" stroke-linejoin="round"/>
<polyline points="53.2,540.1 66.0,540.6 86.8,538.4 107.6,538.2 128.4,537.9 149.2,537.9 170.0,538.7 190.8,540.4 211.6,537.9 232.5,538.2 253.3,540.3 274.1,539.5 294.9,538.1 315.7,536.5 336.5,536.8 357.3,538.5 378.1,540.8 398.9,539.8 419.8,539.5 440.6,538.5 461.4,538.1 482.2,539.8 503.0,540.2 523.8,537.1 544.6,537.8 565.4,538.8" fill="none" stroke="#EF843C" stroke-width="1.0" stroke-linejoin="round"/>
<line x1="671.00" y1="403.50" x2="1190.00" y2="403.50" stroke="#fff" stroke-width="1" stroke-opacity="0.155"/>
<line x1="671.00" y1="427.50" x2="1190.00" y2="427.50" stroke="#fff" stroke-width="1" stroke-opacity="0.155"/>
<line x1="671.00" y1="452.50" x2="1190.00" y2="452.50" stroke="#fff" stroke-width="1" stroke-opacity="0.155"/>
<line x1="671.00" y1="476.50" x2="1190.00" y2="476.50" stroke="#fff" stroke-width="1" stroke-opacity="0.155"/>
<line x1="671.00" y1="501.50" x2="1190.00" y2="501.50" stroke="#fff" stroke-width="1" stroke-opacity="0.155"/>
<line x1="671.00" y1="525.50" x2="1190.00" y2="525.50" stroke="#fff" stroke-width="1" stroke-opacity="0.155"/>
<line x1="671.00" y1="550.50" x2="1190.00" y2="550.50" stroke="#fff" stroke-width="1" stroke-opacity="0.155"/>
<line x1="725.50" y1="403.00" x2="725.50" y2="551.00" stroke="#fff" stroke-width="1" stroke-opacity="0.155"/>
<line x1="787.50" y1="403.00" x2="787.50" y2="551.00" stroke="#fff" stroke-width="1" stroke-opacity="0.155"/>
<line x1="848.50" y1="403.00" x2="848.50" y2="551.00" stroke="#fff" stroke-width="1" stroke-opacity="0.155"/>
<line x1="910.50" y1="403.00" x2="910.50" y2="551.00" stroke="#fff" stroke-width="1" stroke-opacity="0.155"/>
<line x1="972.50" y1="403.00" x2="972.50" y2="551.00" stroke="#fff" stroke-width="1" stroke-opacity="0.155"/>
<line x1="1034.50" y1="403.00" x2="1034.50" y2="551.00" stroke="#fff" stroke-width="1" stroke-opacity="0.155"/>
<line x1="1096.50" y1="403.00" x2="1096.50" y2="551.00" stroke="#fff" stroke-width="1" stroke-opacity="0.155"/>
<line x1="1158.50" y1="403.00" x2="1158.50" y2="551.00" stroke="#fff" stroke-width="1" stroke-opacity="0.155"/>
<polygon points="671.2,531.0 684.1,532.3 1158.4,532.3 1179.0,534.5 1179.0,550.5 671.2,550.5" fill="#7EB26D" fill-opacity="0.1"/>
<polygon points="671.2,524.9 684.1,525.5 1158.4,525.5 1179.0,526.6 1179.0,534.5 1158.4,532.3 684.1,532.3 671.2,531.0" fill="#EAB839" fill-opacity="0.1"/>
<polygon points="671.2,523.4 684.1,523.9 1158.4,523.9 1179.0,525.6 1179.0,526.6 1158.4,525.5 684.1,525.5 671.2,524.9" fill="#6ED0E0" fill-opacity="0.1"/>
<polygon points="671.2,453.0 684.1,455.2 1158.4,455.2 1179.0,422.4 1179.0,525.6 1158.4,523.9 684.1,523.9 671.2,523.4" fill="#EF843C" fill-opacity="0.1"/>
<polygon points="671.2,449.5 684.1,451.8 1158.4,451.8 1179.0,417.3 1179.0,422.4 1158.4,455.2 684.1,455.2 671.2,453.0" fill="#E24D42" fill-opacity="0.1"/>
<polyline points="671.2,531.0 684.1,532.3 1158.4,532.3 1179.0,534.5" fill="none" stroke="#7EB26D" stroke-width="1.0" stroke-linejoin="round"/>
<polyline points="671.2,524.9 684.1,525.5 1158.4,525.5 1179.0,526.6" fill="none" stroke="#EAB839" stroke-width="1.0" stroke-linejoin="round"/>
<polyline points="671.2,523.4 684.1,523.9 1158.4,523.9 1179.0,525.6" fill="none" stroke="#6ED0E0" stroke-width="1.0" stroke-linejoin="round"/>
<polyline points="671.2,453.0 684.1,455.2 1158.4,455.2 1179.0,422.4" fill="none" stroke="#EF843C" stroke-width="1.0" stroke-linejoin="round"/>
<polyline points="671.2,449.5 684.1,451.8 1158.4,451.8 1179.0,417.3" fill="none" stroke="#E24D42" stroke-width="1.0" stroke-linejoin="round"/>
<line x1="1284.00" y1="403.50" x2="1803.00" y2="403.50" stroke="#fff" stroke-width="1" stroke-opacity="0.155"/>
<line x1="1284.00" y1="434.50" x2="1803.00" y2="434.50" stroke="#fff" stroke-width="1" stroke-opacity="0.155"/>
<line x1="1284.00" y1="466.50" x2="1803.00" y2="466.50" stroke="#fff" stroke-width="1" stroke-opacity="0.155"/>
<line x1="1284.00" y1="497.50" x2="1803.00" y2="497.50" stroke="#fff" stroke-width="1" stroke-opacity="0.155"/>
<line x1="1284.00" y1="529.50" x2="1803.00" y2="529.50" stroke="#fff" stroke-width="1" stroke-opacity="0.155"/>
<line x1="1338.50" y1="403.00" x2="1338.50" y2="530.00" stroke="#fff" stroke-width="1" stroke-opacity="0.155"/>
<line x1="1400.50" y1="403.00" x2="1400.50" y2="530.00" stroke="#fff" stroke-width="1" stroke-opacity="0.155"/>
<line x1="1461.50" y1="403.00" x2="1461.50" y2="530.00" stroke="#fff" stroke-width="1" stroke-opacity="0.155"/>
<line x1="1523.50" y1="403.00" x2="1523.50" y2="530.00" stroke="#fff" stroke-width="1" stroke-opacity="0.155"/>
<line x1="1585.50" y1="403.00" x2="1585.50" y2="530.00" stroke="#fff" stroke-width="1" stroke-opacity="0.155"/>
<line x1="1647.50" y1="403.00" x2="1647.50" y2="530.00" stroke="#fff" stroke-width="1" stroke-opacity="0.155"/>
<line x1="1709.50" y1="403.00" x2="1709.50" y2="530.00" stroke="#fff" stroke-width="1" stroke-opacity="0.155"/>
<line x1="1771.50" y1="403.00" x2="1771.50" y2="530.00" stroke="#fff" stroke-width="1" stroke-opacity="0.155"/>
<polygon points="1284.1,485.1 1297.0,498.3 1317.7,499.5 1338.7,481.0 1359.0,497.5 1379.5,496.2 1400.3,481.8 1420.8,500.8 1441.3,498.3 1461.8,476.0 1482.5,498.3 1503.2,500.8 1523.5,486.4 1544.0,490.9 1565.1,495.5 1585.6,471.9 1606.3,498.3 1627.0,503.3 1647.6,489.2 1668.3,489.2 1688.8,498.8 1709.5,489.2 1730.1,498.3 1750.8,493.9 1771.5,484.3 1791.7,485.1 1791.7,529.5 1284.1,529.5" fill="#7EB26D" fill-opacity="0.1"/>
<polyline points="1284.1,485.1 1297.0,498.3 1317.7,499.5 1338.7,481.0 1359.0,497.5 1379.5,496.2 1400.3,481.8 1420.8,500.8 1441.3,498.3 1461.8,476.0 1482.5,498.3 1503.2,500.8 1523.5,486.4 1544.0,490.9 1565.1,495.5 1585.6,471.9 1606.3,498.3 1627.0,503.3 1647.6,489.2 1668.3,489.2 1688.8,498.8 1709.5,489.2 1730.1,498.3 1750.8,493.9 1771.5,484.3 1791.7,485.1" fill="none" stroke="#7EB26D" stroke-width="1.1" stroke-linejoin="round"/>
<polygon points="1284.1,485.4 1297.0,502.5 1317.7,513.7 1338.7,491.7 1359.0,500.0 1379.5,513.7 1400.3,488.4 1420.8,509.9 1441.3,494.2 1461.8,488.4 1482.5,504.1 1503.2,510.7 1523.5,506.6 1544.0,493.4 1565.1,509.1 1585.6,484.3 1606.3,513.6 1627.0,507.4 1647.6,499.5 1668.3,500.3 1688.8,503.0 1709.5,497.8 1730.1,506.1 1750.8,503.0 1771.5,498.3 1791.7,501.2 1791.7,529.5 1284.1,529.5" fill="#EAB839" fill-opacity="0.1"/>
<polyline points="1284.1,485.4 1297.0,502.5 1317.7,513.7 1338.7,491.7 1359.0,500.0 1379.5,513.7 1400.3,488.4 1420.8,509.9 1441.3,494.2 1461.8,488.4 1482.5,504.1 1503.2,510.7 1523.5,506.6 1544.0,493.4 1565.1,509.1 1585.6,484.3 1606.3,513.6 1627.0,507.4 1647.6,499.5 1668.3,500.3 1688.8,503.0 1709.5,497.8 1730.1,506.1 1750.8,503.0 1771.5,498.3 1791.7,501.2" fill="none" stroke="#EAB839" stroke-width="1.1" stroke-linejoin="round"/>
<polygon points="1284.1,467.8 1297.0,528.9 1317.7,524.8 1338.7,488.9 1359.0,516.5 1379.5,528.6 1400.3,499.2 1420.8,529.3 1441.3,512.4 1461.8,477.7 1482.5,526.1 1503.2,529.3 1523.5,510.7 1544.0,511.2 1565.1,511.2 1585.6,480.2 1606.3,528.6 1627.0,528.6 1647.6,501.6 1668.3,512.4 1688.8,520.7 1709.5,500.0 1730.1,519.8 1750.8,519.8 1771.5,506.1 1791.7,508.3 1791.7,529.5 1284.1,529.5" fill="#6ED0E0" fill-opacity="0.06"/>
<polyline points="1284.1,467.8 1297.0,528.9 1317.7,524.8 1338.7,488.9 1359.0,516.5 1379.5,528.6 1400.3,499.2 1420.8,529.3 1441.3,512.4 1461.8,477.7 1482.5,526.1 1503.2,529.3 1523.5,510.7 1544.0,511.2 1565.1,511.2 1585.6,480.2 1606.3,528.6 1627.0,528.6 1647.6,501.6 1668.3,512.4 1688.8,520.7 1709.5,500.0 1730.1,519.8 1750.8,519.8 1771.5,506.1 1791.7,508.3" fill="none" stroke="#6ED0E0" stroke-width="1.1" stroke-linejoin="round"/>
<polygon points="1284.1,469.4 1297.0,529.3 1317.7,518.2 1338.7,502.5 1359.0,520.7 1379.5,529.3 1400.3,511.6 1420.8,528.1 1441.3,517.4 1461.8,490.1 1482.5,528.6 1503.2,529.3 1523.5,518.2 1544.0,514.0 1565.1,518.2 1585.6,485.6 1606.3,529.3 1627.0,529.3 1647.6,525.6 1668.3,521.5 1688.8,516.5 1709.5,510.7 1730.1,515.7 1750.8,529.3 1771.5,514.4 1791.7,505.8 1791.7,529.5 1284.1,529.5" fill="#EF843C" fill-opacity="0.1"/>
<polyline points="1284.1,469.4 1297.0,529.3 1317.7,518.2 1338.7,502.5 1359.0,520.7 1379.5,529.3 1400.3,511.6 1420.8,528.1 1441.3,517.4 1461.8,490.1 1482.5,528.6 1503.2,529.3 1523.5,518.2 1544.0,514.0 1565.1,518.2 1585.6,485.6 1606.3,529.3 1627.0,529.3 1647.6,525.6 1668.3,521.5 1688.8,516.5 1709.5,510.7 1730.1,515.7 1750.8,529.3 1771.5,514.4 1791.7,505.8" fill="none" stroke="#EF843C" stroke-width="1.1" stroke-linejoin="round"/>
<polygon points="1284.1,470.2 1297.0,529.3 1317.7,522.3 1338.7,499.2 1359.0,518.2 1379.5,529.3 1400.3,507.4 1420.8,528.6 1441.3,513.2 1461.8,484.3 1482.5,528.1 1503.2,529.3 1523.5,518.2 1544.0,523.1 1565.1,513.2 1585.6,482.6 1606.3,529.3 1627.0,529.3 1647.6,524.8 1668.3,519.0 1688.8,513.2 1709.5,507.4 1730.1,512.7 1750.8,529.3 1771.5,508.3 1791.7,512.4 1791.7,529.5 1284.1,529.5" fill="#E24D42" fill-opacity="0.1"/>
<polyline points="1284.1,470.2 1297.0,529.3 1317.7,522.3 1338.7,499.2 1359.0,518.2 1379.5,529.3 1400.3,507.4 1420.8,528.6 1441.3,513.2 1461.8,484.3 1482.5,528.1 1503.2,529.3 1523.5,518.2 1544.0,523.1 1565.1,513.2 1585.6,482.6 1606.3,529.3 1627.0,529.3 1647.6,524.8 1668.3,519.0 1688.8,513.2 1709.5,507.4 1730.1,512.7 1750.8,529.3 1771.5,508.3 1791.7,512.4" fill="none" stroke="#E24D42" stroke-width="1.1" stroke-linejoin="round"/>
<polygon points="1284.1,484.3 1297.0,492.6 1317.7,493.0 1338.7,475.2 1359.0,490.9 1379.5,490.4 1400.3,476.0 1420.8,495.5 1441.3,492.6 1461.8,472.7 1482.5,492.6 1503.2,495.4 1523.5,481.0 1544.0,485.1 1565.1,489.6 1585.6,474.9 1606.3,493.0 1627.0,497.5 1647.6,482.3 1668.3,481.8 1688.8,492.1 1709.5,483.0 1730.1,492.1 1750.8,486.4 1771.5,478.2 1791.7,475.5 1791.7,529.5 1284.1,529.5" fill="#1F78C1" fill-opacity="0.075"/>
<polyline points="1284.1,484.3 1297.0,492.6 1317.7,493.0 1338.7,475.2 1359.0,490.9 1379.5,490.4 1400.3,476.0 1420.8,495.5 1441.3,492.6 1461.8,472.7 1482.5,492.6 1503.2,495.4 1523.5,481.0 1544.0,485.1 1565.1,489.6 1585.6,474.9 1606.3,493.0 1627.0,497.5 1647.6,482.3 1668.3,481.8 1688.8,492.1 1709.5,483.0 1730.1,492.1 1750.8,486.4 1771.5,478.2 1791.7,475.5" fill="none" stroke="#1F78C1" stroke-width="1.1" stroke-linejoin="round"/>
<polygon points="1284.1,478.5 1297.0,495.5 1317.7,504.1 1338.7,484.3 1359.0,490.1 1379.5,508.3 1400.3,481.0 1420.8,500.8 1441.3,485.9 1461.8,480.2 1482.5,496.2 1503.2,502.8 1523.5,500.0 1544.0,486.8 1565.1,499.5 1585.6,477.7 1606.3,505.0 1627.0,500.0 1647.6,492.6 1668.3,492.6 1688.8,495.0 1709.5,491.2 1730.1,497.5 1750.8,496.2 1771.5,490.9 1791.7,491.2 1791.7,529.5 1284.1,529.5" fill="#BA43A9" fill-opacity="0.06"/>
<polyline points="1284.1,478.5 1297.0,495.5 1317.7,504.1 1338.7,484.3 1359.0,490.1 1379.5,508.3 1400.3,481.0 1420.8,500.8 1441.3,485.9 1461.8,480.2 1482.5,496.2 1503.2,502.8 1523.5,500.0 1544.0,486.8 1565.1,499.5 1585.6,477.7 1606.3,505.0 1627.0,500.0 1647.6,492.6 1668.3,492.6 1688.8,495.0 1709.5,491.2 1730.1,497.5 1750.8,496.2 1771.5,490.9 1791.7,491.2" fill="none" stroke="#BA43A9" stroke-width="1.1" stroke-linejoin="round"/>
<polygon points="1284.1,452.0 1297.0,508.3 1317.7,505.0 1338.7,468.9 1359.0,497.5 1379.5,508.8 1400.3,480.2 1420.8,510.2 1441.3,491.7 1461.8,455.4 1482.5,509.1 1503.2,511.6 1523.5,492.6 1544.0,491.7 1565.1,491.4 1585.6,462.3 1606.3,510.2 1627.0,509.6 1647.6,482.6 1668.3,496.7 1688.8,500.8 1709.5,480.5 1730.1,502.5 1750.8,498.8 1771.5,487.6 1791.7,488.4 1791.7,529.5 1284.1,529.5" fill="#705DA0" fill-opacity="0.06"/>
<polyline points="1284.1,452.0 1297.0,508.3 1317.7,505.0 1338.7,468.9 1359.0,497.5 1379.5,508.8 1400.3,480.2 1420.8,510.2 1441.3,491.7 1461.8,455.4 1482.5,509.1 1503.2,511.6 1523.5,492.6 1544.0,491.7 1565.1,491.4 1585.6,462.3 1606.3,510.2 1627.0,509.6 1647.6,482.6 1668.3,496.7 1688.8,500.8 1709.5,480.5 1730.1,502.5 1750.8,498.8 1771.5,487.6 1791.7,488.4" fill="none" stroke="#705DA0" stroke-width="1.1" stroke-linejoin="round"/>
<polygon points="1284.1,456.2 1297.0,518.2 1317.7,505.0 1338.7,487.6 1359.0,507.9 1379.5,516.5 1400.3,497.5 1420.8,512.7 1441.3,497.5 1461.8,477.2 1482.5,514.0 1503.2,513.6 1523.5,505.4 1544.0,500.8 1565.1,505.0 1585.6,473.5 1606.3,518.2 1627.0,514.4 1647.6,509.1 1668.3,504.1 1688.8,501.6 1709.5,497.8 1730.1,504.1 1750.8,514.0 1771.5,499.7 1791.7,493.0 1791.7,529.5 1284.1,529.5" fill="#508642" fill-opacity="0.1"/>
<polyline points="1284.1,456.2 1297.0,518.2 1317.7,505.0 1338.7,487.6 1359.0,507.9 1379.5,516.5 1400.3,497.5 1420.8,512.7 1441.3,497.5 1461.8,477.2 1482.5,514.0 1503.2,513.6 1523.5,505.4 1544.0,500.8 1565.1,505.0 1585.6,473.5 1606.3,518.2 1627.0,514.4 1647.6,509.1 1668.3,504.1 1688.8,501.6 1709.5,497.8 1730.1,504.1 1750.8,514.0 1771.5,499.7 1791.7,493.0" fill="none" stroke="#508642" stroke-width="1.1" stroke-linejoin="round"/>
<polygon points="1284.1,516.9 1297.0,515.7 1317.7,512.7 1338.7,511.9 1359.0,513.7 1379.5,513.2 1400.3,512.4 1420.8,517.4 1441.3,512.9 1461.8,514.4 1482.5,515.7 1503.2,516.2 1523.5,515.7 1544.0,517.4 1565.1,518.2 1585.6,510.7 1606.3,517.0 1627.0,513.2 1647.6,516.9 1668.3,515.4 1688.8,515.7 1709.5,516.2 1730.1,515.7 1750.8,515.7 1771.5,516.2 1791.7,517.0 1791.7,529.5 1284.1,529.5" fill="#CCA300" fill-opacity="0.1"/>
<polyline points="1284.1,516.9 1297.0,515.7 1317.7,512.7 1338.7,511.9 1359.0,513.7 1379.5,513.2 1400.3,512.4 1420.8,517.4 1441.3,512.9 1461.8,514.4 1482.5,515.7 1503.2,516.2 1523.5,515.7 1544.0,517.4 1565.1,518.2 1585.6,510.7 1606.3,517.0 1627.0,513.2 1647.6,516.9 1668.3,515.4 1688.8,515.7 1709.5,516.2 1730.1,515.7 1750.8,515.7 1771.5,516.2 1791.7,517.0" fill="none" stroke="#CCA300" stroke-width="1.1" stroke-linejoin="round"/>
<polygon points="1284.1,482.6 1297.0,500.0 1317.7,508.3 1338.7,502.5 1359.0,499.5 1379.5,516.5 1400.3,503.3 1420.8,500.8 1441.3,510.2 1461.8,500.8 1482.5,502.1 1503.2,507.4 1523.5,502.0 1544.0,510.7 1565.1,505.8 1585.6,506.1 1606.3,500.0 1627.0,503.3 1647.6,512.1 1668.3,505.8 1688.8,505.4 1709.5,503.3 1730.1,494.2 1750.8,510.2 1771.5,506.6 1791.7,505.4 1791.7,529.5 1284.1,529.5" fill="#447EBC" fill-opacity="0.06"/>
<polyline points="1284.1,482.6 1297.0,500.0 1317.7,508.3 1338.7,502.5 1359.0,499.5 1379.5,516.5 1400.3,503.3 1420.8,500.8 1441.3,510.2 1461.8,500.8 1482.5,502.1 1503.2,507.4 1523.5,502.0 1544.0,510.7 1565.1,505.8 1585.6,506.1 1606.3,500.0 1627.0,503.3 1647.6,512.1 1668.3,505.8 1688.8,505.4 1709.5,503.3 1730.1,494.2 1750.8,510.2 1771.5,506.6 1791.7,505.4" fill="none" stroke="#447EBC" stroke-width="1.1" stroke-linejoin="round"/>
<polygon points="1284.1,523.1 1297.0,523.5 1317.7,524.5 1338.7,525.6 1359.0,523.1 1379.5,525.6 1400.3,522.0 1420.8,526.0 1441.3,525.6 1461.8,526.8 1482.5,521.0 1503.2,524.8 1523.5,525.6 1544.0,523.1 1565.1,522.3 1585.6,524.5 1606.3,524.8 1627.0,525.1 1647.6,524.8 1668.3,522.0 1688.8,525.1 1709.5,524.0 1730.1,521.5 1750.8,524.8 1771.5,525.6 1791.7,524.5 1791.7,529.5 1284.1,529.5" fill="#C15C17" fill-opacity="0.1"/>
<polyline points="1284.1,523.1 1297.0,523.5 1317.7,524.5 1338.7,525.6 1359.0,523.1 1379.5,525.6 1400.3,522.0 1420.8,526.0 1441.3,525.6 1461.8,526.8 1482.5,521.0 1503.2,524.8 1523.5,525.6 1544.0,523.1 1565.1,522.3 1585.6,524.5 1606.3,524.8 1627.0,525.1 1647.6,524.8 1668.3,522.0 1688.8,525.1 1709.5,524.0 1730.1,521.5 1750.8,524.8 1771.5,525.6 1791.7,524.5" fill="none" stroke="#C15C17" stroke-width="1.1" stroke-linejoin="round"/>
<line x1="60.00" y1="669.50" x2="577.00" y2="669.50" stroke="#fff" stroke-width="1" stroke-opacity="0.155"/>
<line x1="60.00" y1="711.50" x2="577.00" y2="711.50" stroke="#fff" stroke-width="1" stroke-opacity="0.155"/>
<line x1="60.00" y1="753.50" x2="577.00" y2="753.50" stroke="#fff" stroke-width="1" stroke-opacity="0.155"/>
<line x1="60.00" y1="795.50" x2="577.00" y2="795.50" stroke="#fff" stroke-width="1" stroke-opacity="0.155"/>
<line x1="60.00" y1="837.50" x2="577.00" y2="837.50" stroke="#fff" stroke-width="1" stroke-opacity="0.155"/>
<line x1="114.50" y1="669.00" x2="114.50" y2="838.00" stroke="#fff" stroke-width="1" stroke-opacity="0.155"/>
<line x1="175.50" y1="669.00" x2="175.50" y2="838.00" stroke="#fff" stroke-width="1" stroke-opacity="0.155"/>
<line x1="237.50" y1="669.00" x2="237.50" y2="838.00" stroke="#fff" stroke-width="1" stroke-opacity="0.155"/>
<line x1="298.50" y1="669.00" x2="298.50" y2="838.00" stroke="#fff" stroke-width="1" stroke-opacity="0.155"/>
<line x1="360.50" y1="669.00" x2="360.50" y2="838.00" stroke="#fff" stroke-width="1" stroke-opacity="0.155"/>
<line x1="422.50" y1="669.00" x2="422.50" y2="838.00" stroke="#fff" stroke-width="1" stroke-opacity="0.155"/>
<line x1="483.50" y1="669.00" x2="483.50" y2="838.00" stroke="#fff" stroke-width="1" stroke-opacity="0.155"/>
<line x1="545.50" y1="669.00" x2="545.50" y2="838.00" stroke="#fff" stroke-width="1" stroke-opacity="0.155"/>
<line x1="674.60" y1="667.50" x2="1209.00" y2="667.50" stroke="#fff" stroke-width="1" stroke-opacity="0.08"/>
<line x1="674.60" y1="711.50" x2="1209.00" y2="711.50" stroke="#fff" stroke-width="1" stroke-opacity="0.08"/>
<line x1="674.60" y1="756.50" x2="1209.00" y2="756.50" stroke="#fff" stroke-width="1" stroke-opacity="0.08"/>
<line x1="674.60" y1="800.50" x2="1209.00" y2="800.50" stroke="#fff" stroke-width="1" stroke-opacity="0.08"/>
<line x1="797.50" y1="667.00" x2="797.50" y2="827.00" stroke="#fff" stroke-width="1" stroke-opacity="0.08"/>
<line x1="923.50" y1="667.00" x2="923.50" y2="827.00" stroke="#fff" stroke-width="1" stroke-opacity="0.08"/>
<line x1="1049.50" y1="667.00" x2="1049.50" y2="827.00" stroke="#fff" stroke-width="1" stroke-opacity="0.08"/>
<line x1="1176.50" y1="667.00" x2="1176.50" y2="827.00" stroke="#fff" stroke-width="1" stroke-opacity="0.08"/>
<polygon points="678.5,803.6 691.2,806.4 712.7,768.5 733.5,691.3 754.4,700.6 775.9,788.4 797.5,789.4 818.4,796.6 839.6,690.3 860.5,693.4 881.6,777.5 902.8,796.2 923.5,794.5 944.6,721.1 965.6,683.3 986.7,742.2 1007.8,799.7 1028.8,792.1 1049.3,740.2 1070.4,705.3 1092.0,735.0 1112.9,779.2 1134.4,804.8 1155.6,745.3 1176.5,703.4 1197.7,728.5 1197.7,822.4 678.5,822.4" fill="#73BF69" fill-opacity="0.1"/>
<polygon points="678.5,809.3 691.2,807.3 712.7,769.3 733.5,694.6 754.4,710.0 775.9,782.6 797.5,793.5 818.4,785.9 839.6,699.3 860.5,705.5 881.6,771.6 902.8,799.3 923.5,787.4 944.6,728.9 965.6,690.3 986.7,743.2 1007.8,797.6 1028.8,785.3 1049.3,739.1 1070.4,717.2 1092.0,743.7 1112.9,769.9 1134.4,805.4 1155.6,734.0 1176.5,718.6 1197.7,717.2 1197.7,822.4 678.5,822.4" fill="#F2CC0C" fill-opacity="0.1"/>
<polyline points="678.5,803.6 691.2,806.4 712.7,768.5 733.5,691.3 754.4,700.6 775.9,788.4 797.5,789.4 818.4,796.6 839.6,690.3 860.5,693.4 881.6,777.5 902.8,796.2 923.5,794.5 944.6,721.1 965.6,683.3 986.7,742.2 1007.8,799.7 1028.8,792.1 1049.3,740.2 1070.4,705.3 1092.0,735.0 1112.9,779.2 1134.4,804.8 1155.6,745.3 1176.5,703.4 1197.7,728.5" fill="none" stroke="#73BF69" stroke-width="1.0" stroke-linejoin="round"/>
<polyline points="678.5,809.3 691.2,807.3 712.7,769.3 733.5,694.6 754.4,710.0 775.9,782.6 797.5,793.5 818.4,785.9 839.6,699.3 860.5,705.5 881.6,771.6 902.8,799.3 923.5,787.4 944.6,728.9 965.6,690.3 986.7,743.2 1007.8,797.6 1028.8,785.3 1049.3,739.1 1070.4,717.2 1092.0,743.7 1112.9,769.9 1134.4,805.4 1155.6,734.0 1176.5,718.6 1197.7,717.2" fill="none" stroke="#F2CC0C" stroke-width="1.0" stroke-linejoin="round"/>
<line x1="1268.00" y1="669.50" x2="1803.00" y2="669.50" stroke="#fff" stroke-width="1" stroke-opacity="0.155"/>
<line x1="1268.00" y1="705.50" x2="1803.00" y2="705.50" stroke="#fff" stroke-width="1" stroke-opacity="0.155"/>
<line x1="1268.00" y1="742.50" x2="1803.00" y2="742.50" stroke="#fff" stroke-width="1" stroke-opacity="0.155"/>
<line x1="1268.00" y1="779.50" x2="1803.00" y2="779.50" stroke="#fff" stroke-width="1" stroke-opacity="0.155"/>
<line x1="1268.00" y1="816.50" x2="1803.00" y2="816.50" stroke="#fff" stroke-width="1" stroke-opacity="0.155"/>
<line x1="1323.50" y1="669.00" x2="1323.50" y2="817.00" stroke="#fff" stroke-width="1" stroke-opacity="0.155"/>
<line x1="1387.50" y1="669.00" x2="1387.50" y2="817.00" stroke="#fff" stroke-width="1" stroke-opacity="0.155"/>
<line x1="1451.50" y1="669.00" x2="1451.50" y2="817.00" stroke="#fff" stroke-width="1" stroke-opacity="0.155"/>
<line x1="1515.50" y1="669.00" x2="1515.50" y2="817.00" stroke="#fff" stroke-width="1" stroke-opacity="0.155"/>
<line x1="1578.50" y1="669.00" x2="1578.50" y2="817.00" stroke="#fff" stroke-width="1" stroke-opacity="0.155"/>
<line x1="1642.50" y1="669.00" x2="1642.50" y2="817.00" stroke="#fff" stroke-width="1" stroke-opacity="0.155"/>
<line x1="1706.50" y1="669.00" x2="1706.50" y2="817.00" stroke="#fff" stroke-width="1" stroke-opacity="0.155"/>
<line x1="1770.50" y1="669.00" x2="1770.50" y2="817.00" stroke="#fff" stroke-width="1" stroke-opacity="0.155"/>
<polygon points="1267.8,763.5 1281.3,759.4 1302.6,771.0 1323.7,778.6 1345.3,768.6 1366.4,786.5 1387.7,752.2 1408.9,775.5 1430.0,774.4 1451.7,782.7 1472.7,747.1 1494.0,774.0 1515.6,781.0 1536.7,767.3 1557.4,762.6 1578.6,772.3 1600.3,771.6 1621.5,781.0 1642.6,775.4 1663.9,772.9 1685.0,773.5 1706.6,765.0 1727.7,751.3 1748.9,773.5 1770.6,775.7 1791.8,774.6 1791.8,816.5 1267.8,816.5" fill="#7EB26D" fill-opacity="0.105"/>
<polyline points="1267.8,763.5 1281.3,759.4 1302.6,771.0 1323.7,778.6 1345.3,768.6 1366.4,786.5 1387.7,752.2 1408.9,775.5 1430.0,774.4 1451.7,782.7 1472.7,747.1 1494.0,774.0 1515.6,781.0 1536.7,767.3 1557.4,762.6 1578.6,772.3 1600.3,771.6 1621.5,781.0 1642.6,775.4 1663.9,772.9 1685.0,773.5 1706.6,765.0 1727.7,751.3 1748.9,773.5 1770.6,775.7 1791.8,774.6" fill="none" stroke="#7EB26D" stroke-width="1.0" stroke-linejoin="round"/>
<polygon points="1267.8,764.4 1281.3,756.3 1302.6,756.5 1323.7,746.9 1345.3,749.4 1366.4,757.3 1387.7,754.7 1408.9,758.8 1430.0,752.2 1451.7,746.0 1472.7,757.3 1494.0,757.9 1515.6,750.3 1536.7,742.8 1557.4,748.1 1578.6,748.8 1600.3,758.4 1621.5,758.4 1642.6,748.4 1663.9,744.1 1685.0,752.8 1706.6,754.7 1727.7,760.7 1748.9,748.4 1770.6,746.9 1791.8,729.6 1791.8,816.5 1267.8,816.5" fill="#EAB839" fill-opacity="0.105"/>
<polyline points="1267.8,764.4 1281.3,756.3 1302.6,756.5 1323.7,746.9 1345.3,749.4 1366.4,757.3 1387.7,754.7 1408.9,758.8 1430.0,752.2 1451.7,746.0 1472.7,757.3 1494.0,757.9 1515.6,750.3 1536.7,742.8 1557.4,748.1 1578.6,748.8 1600.3,758.4 1621.5,758.4 1642.6,748.4 1663.9,744.1 1685.0,752.8 1706.6,754.7 1727.7,760.7 1748.9,748.4 1770.6,746.9 1791.8,729.6" fill="none" stroke="#EAB839" stroke-width="1.0" stroke-linejoin="round"/>
<polygon points="1267.8,756.0 1281.3,755.4 1302.6,746.0 1323.7,742.8 1345.3,739.4 1366.4,755.0 1387.7,750.3 1408.9,748.4 1430.0,746.6 1451.7,739.0 1472.7,752.2 1494.0,753.7 1515.6,758.4 1536.7,744.3 1557.4,737.5 1578.6,748.4 1600.3,755.4 1621.5,757.9 1642.6,749.4 1663.9,741.5 1685.0,748.8 1706.6,760.3 1727.7,750.9 1748.9,750.3 1770.6,745.8 1791.8,745.4 1791.8,816.5 1267.8,816.5" fill="#6ED0E0" fill-opacity="0.105"/>
<polyline points="1267.8,756.0 1281.3,755.4 1302.6,746.0 1323.7,742.8 1345.3,739.4 1366.4,755.0 1387.7,750.3 1408.9,748.4 1430.0,746.6 1451.7,739.0 1472.7,752.2 1494.0,753.7 1515.6,758.4 1536.7,744.3 1557.4,737.5 1578.6,748.4 1600.3,755.4 1621.5,757.9 1642.6,749.4 1663.9,741.5 1685.0,748.8 1706.6,760.3 1727.7,750.9 1748.9,750.3 1770.6,745.8 1791.8,745.4" fill="none" stroke="#6ED0E0" stroke-width="1.0" stroke-linejoin="round"/>
<polygon points="1267.8,732.5 1281.3,720.2 1302.6,717.8 1323.7,690.7 1345.3,702.3 1366.4,710.8 1387.7,717.8 1408.9,729.3 1430.0,682.2 1451.7,683.5 1472.7,730.4 1494.0,731.1 1515.6,725.5 1536.7,699.5 1557.4,697.3 1578.6,722.7 1600.3,719.8 1621.5,722.3 1642.6,704.4 1663.9,713.1 1685.0,704.8 1706.6,717.6 1727.7,733.8 1748.9,698.2 1770.6,701.0 1791.8,706.1 1791.8,816.5 1267.8,816.5" fill="#EF843C" fill-opacity="0.105"/>
<polyline points="1267.8,732.5 1281.3,720.2 1302.6,717.8 1323.7,690.7 1345.3,702.3 1366.4,710.8 1387.7,717.8 1408.9,729.3 1430.0,682.2 1451.7,683.5 1472.7,730.4 1494.0,731.1 1515.6,725.5 1536.7,699.5 1557.4,697.3 1578.6,722.7 1600.3,719.8 1621.5,722.3 1642.6,704.4 1663.9,713.1 1685.0,704.8 1706.6,717.6 1727.7,733.8 1748.9,698.2 1770.6,701.0 1791.8,706.1" fill="none" stroke="#EF843C" stroke-width="1.0" stroke-linejoin="round"/>
<polygon points="1267.8,747.5 1281.3,765.8 1302.6,738.7 1323.7,736.6 1345.3,739.6 1366.4,751.3 1387.7,751.6 1408.9,739.0 1430.0,707.6 1451.7,733.0 1472.7,750.9 1494.0,744.7 1515.6,749.8 1536.7,727.7 1557.4,732.8 1578.6,737.7 1600.3,767.6 1621.5,749.0 1642.6,740.0 1663.9,721.3 1685.0,721.2 1706.6,746.2 1727.7,756.9 1748.9,750.3 1770.6,735.6 1791.8,724.4 1791.8,816.5 1267.8,816.5" fill="#E24D42" fill-opacity="0.105"/>
<polyline points="1267.8,747.5 1281.3,765.8 1302.6,738.7 1323.7,736.6 1345.3,739.6 1366.4,751.3 1387.7,751.6 1408.9,739.0 1430.0,707.6 1451.7,733.0 1472.7,750.9 1494.0,744.7 1515.6,749.8 1536.7,727.7 1557.4,732.8 1578.6,737.7 1600.3,767.6 1621.5,749.0 1642.6,740.0 1663.9,721.3 1685.0,721.2 1706.6,746.2 1727.7,756.9 1748.9,750.3 1770.6,735.6 1791.8,724.4" fill="none" stroke="#E24D42" stroke-width="1.0" stroke-linejoin="round"/>
<polygon points="1267.8,797.4 1281.3,801.1 1302.6,803.6 1323.7,793.2 1345.3,798.7 1366.4,807.2 1387.7,794.9 1408.9,800.8 1430.0,807.2 1451.7,791.2 1472.7,796.8 1494.0,807.9 1515.6,796.2 1536.7,801.1 1557.4,803.6 1578.6,771.4 1600.3,804.5 1621.5,805.8 1642.6,794.9 1663.9,804.5 1685.0,807.5 1706.6,794.9 1727.7,801.5 1748.9,807.3 1770.6,794.9 1791.8,797.9 1791.8,816.5 1267.8,816.5" fill="#1F78C1" fill-opacity="0.105"/>
<polyline points="1267.8,797.4 1281.3,801.1 1302.6,803.6 1323.7,793.2 1345.3,798.7 1366.4,807.2 1387.7,794.9 1408.9,800.8 1430.0,807.2 1451.7,791.2 1472.7,796.8 1494.0,807.9 1515.6,796.2 1536.7,801.1 1557.4,803.6 1578.6,771.4 1600.3,804.5 1621.5,805.8 1642.6,794.9 1663.9,804.5 1685.0,807.5 1706.6,794.9 1727.7,801.5 1748.9,807.3 1770.6,794.9 1791.8,797.9" fill="none" stroke="#1F78C1" stroke-width="1.0" stroke-linejoin="round"/>
<line x1="1268.00" y1="816.10" x2="1791.84" y2="816.10" stroke="#BA43A9" stroke-width="1.4"/>
</svg>
<div class="t" style="left:33.00px;top:1px;height:27px;line-height:27px;font-size:18px;color:#ccccdc;letter-spacing:0.480px;">StatsD</div>
<div class="t" style="left:98.90px;top:1px;height:27px;line-height:27px;font-size:18px;color:#ccccdc;letter-spacing:0.299px;">/</div>
<div class="t" style="left:109.80px;top:1px;height:27px;line-height:27px;font-size:18px;color:#ccccdc;letter-spacing:0.223px;">Partial_Monitoring</div>
<div class="t" style="left:1308.80px;top:4px;height:21px;line-height:21px;font-size:14px;color:#ccccdc;letter-spacing:0.766px;">2024-08-10 08:11:03 to 2024-08-10 08:15:15</div>
<div class="t" style="left:16.20px;top:49px;height:18px;line-height:18px;font-size:12px;color:#6e9fff;letter-spacing:0.623px;-webkit-text-stroke:0.2px #6e9fff;">datasource</div>
<div class="t" style="left:104.60px;top:48px;height:21px;line-height:21px;font-size:14px;color:#ccccdc;letter-spacing:0.286px;">InfluxDB</div>
<div class="t" style="left:210.60px;top:49px;height:18px;line-height:18px;font-size:12px;color:#6e9fff;letter-spacing:0.564px;-webkit-text-stroke:0.2px #6e9fff;">hostIs</div>
<div class="t" style="left:268.50px;top:48px;height:21px;line-height:21px;font-size:14px;color:#ccccdc;letter-spacing:0.213px;">All</div>
<div class="t" style="left:335.10px;top:49px;height:18px;line-height:18px;font-size:12px;color:#6e9fff;letter-spacing:0.549px;-webkit-text-stroke:0.2px #6e9fff;">timeVariable</div>
<div class="t" style="left:430.00px;top:48px;height:21px;line-height:21px;font-size:14px;color:#ccccdc;letter-spacing:0.009px;">10s</div>
<div class="t" style="left:502.00px;top:49px;height:18px;line-height:18px;font-size:12px;color:#ccccdc;letter-spacing:0.588px;-webkit-text-stroke:0.2px #ccccdc;">put timing peak</div>
<div class="t" style="left:699.40px;top:49px;height:18px;line-height:18px;font-size:12px;color:#ccccdc;letter-spacing:0.578px;-webkit-text-stroke:0.2px #ccccdc;">put timing increase</div>
<div class="t" style="left:917.80px;top:49px;height:18px;line-height:18px;font-size:12px;color:#ccccdc;letter-spacing:0.593px;-webkit-text-stroke:0.2px #ccccdc;">get object increase</div>
<div class="t" style="left:1136.30px;top:49px;height:18px;line-height:18px;font-size:12px;color:#ccccdc;letter-spacing:0.597px;-webkit-text-stroke:0.2px #ccccdc;">increase delete containers</div>
<div class="t" style="left:1398.30px;top:49px;height:18px;line-height:18px;font-size:12px;color:#ccccdc;letter-spacing:0.503px;-webkit-text-stroke:0.2px #ccccdc;">queue increase</div>
<div class="t" style="left:1594.30px;top:49px;height:18px;line-height:18px;font-size:12px;color:#ccccdc;letter-spacing:0.608px;-webkit-text-stroke:0.2px #ccccdc;">New annotation</div>
<div class="t" style="left:240.70px;top:93px;height:21px;line-height:21px;font-size:14px;color:#ccccdc;letter-spacing:0.109px;-webkit-text-stroke:0.25px #ccccdc;">Object PUT GET DEL</div>
<div class="t" style="left:882.45px;top:93px;height:21px;line-height:21px;font-size:14px;color:#ccccdc;letter-spacing:0.349px;-webkit-text-stroke:0.25px #ccccdc;">Disk_inodes</div>
<div class="t" style="left:1495.10px;top:93px;height:21px;line-height:21px;font-size:14px;color:#ccccdc;letter-spacing:0.133px;-webkit-text-stroke:0.25px #ccccdc;">Per Disk BW</div>
<div class="t" style="left:295.05px;top:359px;height:21px;line-height:21px;font-size:14px;color:#ccccdc;letter-spacing:-0.220px;-webkit-text-stroke:0.25px #ccccdc;">CPU</div>
<div class="t" style="left:859.75px;top:359px;height:21px;line-height:21px;font-size:14px;color:#ccccdc;letter-spacing:0.575px;-webkit-text-stroke:0.25px #ccccdc;">Memory Utilization</div>
<div class="t" style="left:1467.10px;top:359px;height:21px;line-height:21px;font-size:14px;color:#ccccdc;letter-spacing:0.456px;-webkit-text-stroke:0.25px #ccccdc;">Per Disk Throughput</div>
<div class="t" style="left:236.85px;top:625px;height:21px;line-height:21px;font-size:14px;color:#ccccdc;letter-spacing:0.533px;-webkit-text-stroke:0.25px #ccccdc;">Object async pending</div>
<div class="t" style="left:856.70px;top:625px;height:21px;line-height:21px;font-size:14px;color:#ccccdc;letter-spacing:0.646px;-webkit-text-stroke:0.25px #ccccdc;">Network Bandwidth</div>
<div class="t" style="left:1486.00px;top:625px;height:21px;line-height:21px;font-size:14px;color:#ccccdc;letter-spacing:0.450px;-webkit-text-stroke:0.25px #ccccdc;">Disk Utilization</div>
<div id="gs">
<div class="t" style="left:17.75px;top:128px;height:18px;line-height:18px;font-size:12px;color:#ccccdc;letter-spacing:0.200px;">30</div>
<div class="t" style="left:17.75px;top:152px;height:18px;line-height:18px;font-size:12px;color:#ccccdc;letter-spacing:0.200px;">25</div>
<div class="t" style="left:17.75px;top:177px;height:18px;line-height:18px;font-size:12px;color:#ccccdc;letter-spacing:0.200px;">20</div>
<div class="t" style="left:17.75px;top:201px;height:18px;line-height:18px;font-size:12px;color:#ccccdc;letter-spacing:0.200px;">15</div>
<div class="t" style="left:17.75px;top:226px;height:18px;line-height:18px;font-size:12px;color:#ccccdc;letter-spacing:0.200px;">10</div>
<div class="t" style="left:24.63px;top:250px;height:18px;line-height:18px;font-size:12px;color:#ccccdc;letter-spacing:0.200px;">5</div>
<div class="t" style="left:24.63px;top:275px;height:18px;line-height:18px;font-size:12px;color:#ccccdc;letter-spacing:0.200px;">0</div>
<div class="t" style="left:73.70px;top:290px;height:18px;line-height:18px;font-size:12px;color:#ccccdc;letter-spacing:0.222px;">08:11:30</div>
<div class="t" style="left:137.70px;top:290px;height:18px;line-height:18px;font-size:12px;color:#ccccdc;letter-spacing:0.111px;">08:12:00</div>
<div class="t" style="left:201.70px;top:290px;height:18px;line-height:18px;font-size:12px;color:#ccccdc;letter-spacing:0.111px;">08:12:30</div>
<div class="t" style="left:265.70px;top:290px;height:18px;line-height:18px;font-size:12px;color:#ccccdc;letter-spacing:0.111px;">08:13:00</div>
<div class="t" style="left:328.70px;top:290px;height:18px;line-height:18px;font-size:12px;color:#ccccdc;letter-spacing:0.111px;">08:13:30</div>
<div class="t" style="left:392.70px;top:290px;height:18px;line-height:18px;font-size:12px;color:#ccccdc;letter-spacing:0.111px;">08:14:00</div>
<div class="t" style="left:456.70px;top:290px;height:18px;line-height:18px;font-size:12px;color:#ccccdc;letter-spacing:0.111px;">08:14:30</div>
<div class="t" style="left:520.70px;top:290px;height:18px;line-height:18px;font-size:12px;color:#ccccdc;letter-spacing:0.111px;">08:15:00</div>
<div class="t" style="left:54.20px;top:315px;height:18px;line-height:18px;font-size:12px;color:#ccccdc;letter-spacing:0.473px;">put</div>
<div class="t" style="left:85.50px;top:315px;height:18px;line-height:18px;font-size:12px;color:#ccccdc;letter-spacing:0.199px;">Avg: 0</div>
<div class="t" style="left:128.20px;top:315px;height:18px;line-height:18px;font-size:12px;color:#ccccdc;letter-spacing:0.389px;">Total: 0</div>
<div class="t" style="left:208.60px;top:315px;height:18px;line-height:18px;font-size:12px;color:#ccccdc;letter-spacing:0.606px;">get</div>
<div class="t" style="left:240.00px;top:315px;height:18px;line-height:18px;font-size:12px;color:#ccccdc;letter-spacing:0.246px;">Avg: 24.6</div>
<div class="t" style="left:300.50px;top:315px;height:18px;line-height:18px;font-size:12px;color:#ccccdc;letter-spacing:0.516px;">Total: 639</div>
<div class="t" style="left:396.70px;top:315px;height:18px;line-height:18px;font-size:12px;color:#ccccdc;letter-spacing:0.434px;">delete</div>
<div class="t" style="left:444.80px;top:315px;height:18px;line-height:18px;font-size:12px;color:#ccccdc;letter-spacing:0.249px;">Avg: 0</div>
<div class="t" style="left:487.60px;top:315px;height:18px;line-height:18px;font-size:12px;color:#ccccdc;letter-spacing:0.376px;">Total: 0</div>
<div class="t" style="left:637.24px;top:128px;height:18px;line-height:18px;font-size:12px;color:#ccccdc;letter-spacing:0.130px;">1 Mil</div>
<div class="t" style="left:631.22px;top:153px;height:18px;line-height:18px;font-size:12px;color:#ccccdc;letter-spacing:0.130px;">750 K</div>
<div class="t" style="left:631.22px;top:178px;height:18px;line-height:18px;font-size:12px;color:#ccccdc;letter-spacing:0.130px;">500 K</div>
<div class="t" style="left:631.22px;top:204px;height:18px;line-height:18px;font-size:12px;color:#ccccdc;letter-spacing:0.130px;">250 K</div>
<div class="t" style="left:656.43px;top:229px;height:18px;line-height:18px;font-size:12px;color:#ccccdc;letter-spacing:0.130px;">0</div>
<div class="t" style="left:699.70px;top:244px;height:18px;line-height:18px;font-size:12px;color:#ccccdc;letter-spacing:0.222px;">08:11:30</div>
<div class="t" style="left:761.70px;top:244px;height:18px;line-height:18px;font-size:12px;color:#ccccdc;letter-spacing:0.111px;">08:12:00</div>
<div class="t" style="left:823.70px;top:244px;height:18px;line-height:18px;font-size:12px;color:#ccccdc;letter-spacing:0.111px;">08:12:30</div>
<div class="t" style="left:885.70px;top:244px;height:18px;line-height:18px;font-size:12px;color:#ccccdc;letter-spacing:0.111px;">08:13:00</div>
<div class="t" style="left:947.70px;top:244px;height:18px;line-height:18px;font-size:12px;color:#ccccdc;letter-spacing:0.111px;">08:13:30</div>
<div class="t" style="left:1009.70px;top:244px;height:18px;line-height:18px;font-size:12px;color:#ccccdc;letter-spacing:0.111px;">08:14:00</div>
<div class="t" style="left:1072.70px;top:244px;height:18px;line-height:18px;font-size:12px;color:#ccccdc;letter-spacing:0.111px;">08:14:30</div>
<div class="t" style="left:1134.70px;top:244px;height:18px;line-height:18px;font-size:12px;color:#ccccdc;letter-spacing:0.111px;">08:15:00</div>
<div class="t" style="left:666.80px;top:269px;height:18px;line-height:18px;font-size:12px;color:#ccccdc;letter-spacing:0.111px;">_srv_node_sda</div>
<div class="t" style="left:763.70px;top:269px;height:18px;line-height:18px;font-size:12px;color:#ccccdc;letter-spacing:0.311px;">Avg: 238 K</div>
<div class="t" style="left:833.10px;top:269px;height:18px;line-height:18px;font-size:12px;color:#ccccdc;letter-spacing:0.424px;">Total: 6.20 Mil</div>
<div class="t" style="left:951.80px;top:269px;height:18px;line-height:18px;font-size:12px;color:#ccccdc;letter-spacing:0.223px;">_srv_node_sda_boot</div>
<div class="t" style="left:1080.70px;top:269px;height:18px;line-height:18px;font-size:12px;color:#ccccdc;letter-spacing:0.369px;">Avg: 304</div>
<div class="t" style="left:1138.90px;top:269px;height:18px;line-height:18px;font-size:12px;color:#ccccdc;letter-spacing:0.230px;">Total: 7.90 K</div>
<div class="t" style="left:666.80px;top:290px;height:18px;line-height:18px;font-size:12px;color:#ccccdc;letter-spacing:0.136px;">_srv_node_sda_dev</div>
<div class="t" style="left:790.30px;top:290px;height:18px;line-height:18px;font-size:12px;color:#ccccdc;letter-spacing:0.331px;">Avg: 470</div>
<div class="t" style="left:847.90px;top:290px;height:18px;line-height:18px;font-size:12px;color:#ccccdc;letter-spacing:0.199px;">Total: 12.2 K</div>
<div class="t" style="left:956.20px;top:290px;height:18px;line-height:18px;font-size:12px;color:#ccccdc;letter-spacing:0.089px;">_srv_node_sda_dev_shm</div>
<div class="t" style="left:1108.30px;top:290px;height:18px;line-height:18px;font-size:12px;color:#ccccdc;letter-spacing:-0.017px;">Avg: 1</div>
<div class="t" style="left:1149.40px;top:290px;height:18px;line-height:18px;font-size:12px;color:#ccccdc;letter-spacing:0.371px;">Total: 26</div>
<div class="t" style="left:666.80px;top:311px;height:18px;line-height:18px;font-size:12px;color:#ccccdc;letter-spacing:0.216px;">_srv_node_sda_mnt_sdb</div>
<div class="t" style="left:819.30px;top:311px;height:18px;line-height:18px;font-size:12px;color:#ccccdc;letter-spacing:0.252px;">Avg: 3.98 K</div>
<div class="t" style="left:891.60px;top:311px;height:18px;line-height:18px;font-size:12px;color:#ccccdc;letter-spacing:0.244px;">Total: 104 K</div>
<div class="t" style="left:1243.42px;top:128px;height:18px;line-height:18px;font-size:12px;color:#ccccdc;letter-spacing:0.370px;">500 kB/s</div>
<div class="t" style="left:1243.42px;top:148px;height:18px;line-height:18px;font-size:12px;color:#ccccdc;letter-spacing:0.370px;">400 kB/s</div>
<div class="t" style="left:1243.42px;top:168px;height:18px;line-height:18px;font-size:12px;color:#ccccdc;letter-spacing:0.370px;">300 kB/s</div>
<div class="t" style="left:1243.42px;top:189px;height:18px;line-height:18px;font-size:12px;color:#ccccdc;letter-spacing:0.370px;">200 kB/s</div>
<div class="t" style="left:1243.42px;top:209px;height:18px;line-height:18px;font-size:12px;color:#ccccdc;letter-spacing:0.370px;">100 kB/s</div>
<div class="t" style="left:1257.50px;top:229px;height:18px;line-height:18px;font-size:12px;color:#ccccdc;letter-spacing:0.370px;">0 kB/s</div>
<div class="t" style="left:1327.70px;top:244px;height:18px;line-height:18px;font-size:12px;color:#ccccdc;letter-spacing:0.222px;">08:11:30</div>
<div class="t" style="left:1387.70px;top:244px;height:18px;line-height:18px;font-size:12px;color:#ccccdc;letter-spacing:0.111px;">08:12:00</div>
<div class="t" style="left:1447.70px;top:244px;height:18px;line-height:18px;font-size:12px;color:#ccccdc;letter-spacing:0.111px;">08:12:30</div>
<div class="t" style="left:1507.70px;top:244px;height:18px;line-height:18px;font-size:12px;color:#ccccdc;letter-spacing:0.111px;">08:13:00</div>
<div class="t" style="left:1567.70px;top:244px;height:18px;line-height:18px;font-size:12px;color:#ccccdc;letter-spacing:0.111px;">08:13:30</div>
<div class="t" style="left:1628.70px;top:244px;height:18px;line-height:18px;font-size:12px;color:#ccccdc;letter-spacing:0.111px;">08:14:00</div>
<div class="t" style="left:1688.70px;top:244px;height:18px;line-height:18px;font-size:12px;color:#ccccdc;letter-spacing:0.111px;">08:14:30</div>
<div class="t" style="left:1748.70px;top:244px;height:18px;line-height:18px;font-size:12px;color:#ccccdc;letter-spacing:0.111px;">08:15:00</div>
<div class="t" style="left:1280.30px;top:269px;height:18px;line-height:18px;font-size:12px;color:#ccccdc;letter-spacing:0.468px;">sda.writes</div>
<div class="t" style="left:1352.10px;top:269px;height:18px;line-height:18px;font-size:12px;color:#ccccdc;letter-spacing:0.382px;">Avg: 94.0 kB/s</div>
<div class="t" style="left:1473.50px;top:269px;height:18px;line-height:18px;font-size:12px;color:#ccccdc;letter-spacing:0.528px;">sdb.writes</div>
<div class="t" style="left:1545.90px;top:269px;height:18px;line-height:18px;font-size:12px;color:#ccccdc;letter-spacing:0.437px;">Avg: 264 kB/s</div>
<div class="t" style="left:1664.60px;top:269px;height:18px;line-height:18px;font-size:12px;color:#ccccdc;letter-spacing:0.476px;">sdc.writes</div>
<div class="t" style="left:1735.70px;top:269px;height:18px;line-height:18px;font-size:12px;color:#ccccdc;letter-spacing:0.283px;">Avg: 120 kB/s</div>
<div class="t" style="left:1280.30px;top:290px;height:18px;line-height:18px;font-size:12px;color:#ccccdc;letter-spacing:0.538px;">sdd.writes</div>
<div class="t" style="left:1352.80px;top:290px;height:18px;line-height:18px;font-size:12px;color:#ccccdc;letter-spacing:0.382px;">Avg: 60.8 kB/s</div>
<div class="t" style="left:1473.80px;top:290px;height:18px;line-height:18px;font-size:12px;color:#ccccdc;letter-spacing:0.498px;">sde.writes</div>
<div class="t" style="left:1545.90px;top:290px;height:18px;line-height:18px;font-size:12px;color:#ccccdc;letter-spacing:0.432px;">Avg: 43.9 kB/s</div>
<div class="t" style="left:1667.70px;top:290px;height:18px;line-height:18px;font-size:12px;color:#ccccdc;letter-spacing:0.492px;">sdf.writes</div>
<div class="t" style="left:1736.40px;top:290px;height:18px;line-height:18px;font-size:12px;color:#ccccdc;letter-spacing:0.260px;">Avg: 47.3 kB/s</div>
<div class="t" style="left:1280.30px;top:311px;height:18px;line-height:18px;font-size:12px;color:#ccccdc;letter-spacing:0.538px;">sdg.writes</div>
<div class="t" style="left:1352.80px;top:311px;height:18px;line-height:18px;font-size:12px;color:#ccccdc;letter-spacing:0.189px;">Avg: 94.1 kB/s</div>
<div class="t" style="left:1471.10px;top:311px;height:18px;line-height:18px;font-size:12px;color:#ccccdc;letter-spacing:0.538px;">sdh.writes</div>
<div class="t" style="left:1543.60px;top:311px;height:18px;line-height:18px;font-size:12px;color:#ccccdc;letter-spacing:0.320px;">Avg: 0 kB/s</div>
<div class="t" style="left:1646.50px;top:311px;height:18px;line-height:18px;font-size:12px;color:#ccccdc;letter-spacing:0.333px;">sda.reads</div>
<div class="t" style="left:1715.30px;top:311px;height:18px;line-height:18px;font-size:12px;color:#ccccdc;letter-spacing:0.239px;">Avg: 10.0 kB/s</div>
<div class="t" style="left:16.91px;top:394px;height:18px;line-height:18px;font-size:12px;color:#ccccdc;letter-spacing:-0.500px;">100%</div>
<div class="t" style="left:23.08px;top:431px;height:18px;line-height:18px;font-size:12px;color:#ccccdc;letter-spacing:-0.500px;">75%</div>
<div class="t" style="left:23.08px;top:467px;height:18px;line-height:18px;font-size:12px;color:#ccccdc;letter-spacing:-0.500px;">50%</div>
<div class="t" style="left:23.08px;top:504px;height:18px;line-height:18px;font-size:12px;color:#ccccdc;letter-spacing:-0.500px;">25%</div>
<div class="t" style="left:29.26px;top:541px;height:18px;line-height:18px;font-size:12px;color:#ccccdc;letter-spacing:-0.500px;">0%</div>
<div class="t" style="left:83.70px;top:556px;height:18px;line-height:18px;font-size:12px;color:#ccccdc;letter-spacing:0.222px;">08:11:30</div>
<div class="t" style="left:146.70px;top:556px;height:18px;line-height:18px;font-size:12px;color:#ccccdc;letter-spacing:0.111px;">08:12:00</div>
<div class="t" style="left:208.70px;top:556px;height:18px;line-height:18px;font-size:12px;color:#ccccdc;letter-spacing:0.111px;">08:12:30</div>
<div class="t" style="left:271.70px;top:556px;height:18px;line-height:18px;font-size:12px;color:#ccccdc;letter-spacing:0.111px;">08:13:00</div>
<div class="t" style="left:333.70px;top:556px;height:18px;line-height:18px;font-size:12px;color:#ccccdc;letter-spacing:0.111px;">08:13:30</div>
<div class="t" style="left:396.70px;top:556px;height:18px;line-height:18px;font-size:12px;color:#ccccdc;letter-spacing:0.111px;">08:14:00</div>
<div class="t" style="left:458.70px;top:556px;height:18px;line-height:18px;font-size:12px;color:#ccccdc;letter-spacing:0.111px;">08:14:30</div>
<div class="t" style="left:520.70px;top:556px;height:18px;line-height:18px;font-size:12px;color:#ccccdc;letter-spacing:0.111px;">08:15:00</div>
<div class="t" style="left:54.20px;top:581px;height:18px;line-height:18px;font-size:12px;color:#ccccdc;letter-spacing:0.316px;">User</div>
<div class="t" style="left:125.20px;top:581px;height:18px;line-height:18px;font-size:12px;color:#ccccdc;letter-spacing:0.449px;">System</div>
<div class="t" style="left:212.30px;top:581px;height:18px;line-height:18px;font-size:12px;color:#ccccdc;letter-spacing:0.492px;">Iowait</div>
<div class="t" style="left:291.00px;top:581px;height:18px;line-height:18px;font-size:12px;color:#ccccdc;letter-spacing:0.468px;">soft_irq</div>
<div class="t" style="left:630.24px;top:394px;height:18px;line-height:18px;font-size:12px;color:#ccccdc;letter-spacing:0.060px;">60 GB</div>
<div class="t" style="left:630.24px;top:418px;height:18px;line-height:18px;font-size:12px;color:#ccccdc;letter-spacing:0.060px;">50 GB</div>
<div class="t" style="left:630.24px;top:443px;height:18px;line-height:18px;font-size:12px;color:#ccccdc;letter-spacing:0.060px;">40 GB</div>
<div class="t" style="left:630.24px;top:467px;height:18px;line-height:18px;font-size:12px;color:#ccccdc;letter-spacing:0.060px;">30 GB</div>
<div class="t" style="left:630.24px;top:492px;height:18px;line-height:18px;font-size:12px;color:#ccccdc;letter-spacing:0.060px;">20 GB</div>
<div class="t" style="left:630.24px;top:516px;height:18px;line-height:18px;font-size:12px;color:#ccccdc;letter-spacing:0.060px;">10 GB</div>
<div class="t" style="left:636.31px;top:541px;height:18px;line-height:18px;font-size:12px;color:#ccccdc;letter-spacing:0.060px;">0 MB</div>
<div class="t" style="left:701.70px;top:556px;height:18px;line-height:18px;font-size:12px;color:#ccccdc;letter-spacing:0.222px;">08:11:30</div>
<div class="t" style="left:763.70px;top:556px;height:18px;line-height:18px;font-size:12px;color:#ccccdc;letter-spacing:0.111px;">08:12:00</div>
<div class="t" style="left:824.70px;top:556px;height:18px;line-height:18px;font-size:12px;color:#ccccdc;letter-spacing:0.111px;">08:12:30</div>
<div class="t" style="left:886.70px;top:556px;height:18px;line-height:18px;font-size:12px;color:#ccccdc;letter-spacing:0.111px;">08:13:00</div>
<div class="t" style="left:948.70px;top:556px;height:18px;line-height:18px;font-size:12px;color:#ccccdc;letter-spacing:0.111px;">08:13:30</div>
<div class="t" style="left:1010.70px;top:556px;height:18px;line-height:18px;font-size:12px;color:#ccccdc;letter-spacing:0.111px;">08:14:00</div>
<div class="t" style="left:1072.70px;top:556px;height:18px;line-height:18px;font-size:12px;color:#ccccdc;letter-spacing:0.111px;">08:14:30</div>
<div class="t" style="left:1134.70px;top:556px;height:18px;line-height:18px;font-size:12px;color:#ccccdc;letter-spacing:0.111px;">08:15:00</div>
<div class="t" style="left:667.50px;top:581px;height:18px;line-height:18px;font-size:12px;color:#ccccdc;letter-spacing:0.246px;">Used</div>
<div class="t" style="left:741.50px;top:581px;height:18px;line-height:18px;font-size:12px;color:#ccccdc;letter-spacing:0.406px;">Cached</div>
<div class="t" style="left:830.00px;top:581px;height:18px;line-height:18px;font-size:12px;color:#ccccdc;letter-spacing:0.471px;">Buffers</div>
<div class="t" style="left:915.80px;top:581px;height:18px;line-height:18px;font-size:12px;color:#ccccdc;letter-spacing:0.056px;">Free</div>
<div class="t" style="left:985.50px;top:581px;height:18px;line-height:18px;font-size:12px;color:#ccccdc;letter-spacing:-0.223px;">SWAP</div>
<div class="t" style="left:1264.45px;top:394px;height:18px;line-height:18px;font-size:12px;color:#ccccdc;letter-spacing:0.200px;">40</div>
<div class="t" style="left:1264.45px;top:425px;height:18px;line-height:18px;font-size:12px;color:#ccccdc;letter-spacing:0.200px;">30</div>
<div class="t" style="left:1264.45px;top:457px;height:18px;line-height:18px;font-size:12px;color:#ccccdc;letter-spacing:0.200px;">20</div>
<div class="t" style="left:1264.45px;top:489px;height:18px;line-height:18px;font-size:12px;color:#ccccdc;letter-spacing:0.200px;">10</div>
<div class="t" style="left:1271.33px;top:520px;height:18px;line-height:18px;font-size:12px;color:#ccccdc;letter-spacing:0.200px;">0</div>
<div class="t" style="left:1314.70px;top:535px;height:18px;line-height:18px;font-size:12px;color:#ccccdc;letter-spacing:0.222px;">08:11:30</div>
<div class="t" style="left:1376.70px;top:535px;height:18px;line-height:18px;font-size:12px;color:#ccccdc;letter-spacing:0.111px;">08:12:00</div>
<div class="t" style="left:1437.70px;top:535px;height:18px;line-height:18px;font-size:12px;color:#ccccdc;letter-spacing:0.111px;">08:12:30</div>
<div class="t" style="left:1499.70px;top:535px;height:18px;line-height:18px;font-size:12px;color:#ccccdc;letter-spacing:0.111px;">08:13:00</div>
<div class="t" style="left:1561.70px;top:535px;height:18px;line-height:18px;font-size:12px;color:#ccccdc;letter-spacing:0.111px;">08:13:30</div>
<div class="t" style="left:1623.70px;top:535px;height:18px;line-height:18px;font-size:12px;color:#ccccdc;letter-spacing:0.111px;">08:14:00</div>
<div class="t" style="left:1685.70px;top:535px;height:18px;line-height:18px;font-size:12px;color:#ccccdc;letter-spacing:0.111px;">08:14:30</div>
<div class="t" style="left:1747.70px;top:535px;height:18px;line-height:18px;font-size:12px;color:#ccccdc;letter-spacing:0.111px;">08:15:00</div>
<div class="t" style="left:1219.5px;top:463.5px;width:60px;height:18px;line-height:18px;font-size:12px;text-align:center;transform:rotate(-90deg);letter-spacing:0.5px">ops/s</div>
<div class="t" style="left:1280.30px;top:560px;height:18px;line-height:18px;font-size:12px;color:#ccccdc;letter-spacing:0.838px;">sdb-w</div>
<div class="t" style="left:1361.50px;top:560px;height:18px;line-height:18px;font-size:12px;color:#ccccdc;letter-spacing:0.833px;">sdc-w</div>
<div class="t" style="left:1441.60px;top:560px;height:18px;line-height:18px;font-size:12px;color:#ccccdc;letter-spacing:0.918px;">sdd-w</div>
<div class="t" style="left:1522.80px;top:560px;height:18px;line-height:18px;font-size:12px;color:#ccccdc;letter-spacing:0.778px;">sde-w</div>
<div class="t" style="left:1603.30px;top:560px;height:18px;line-height:18px;font-size:12px;color:#ccccdc;letter-spacing:0.906px;">sdf-w</div>
<div class="t" style="left:1681.10px;top:560px;height:18px;line-height:18px;font-size:12px;color:#ccccdc;letter-spacing:0.772px;">sdb-r</div>
<div class="t" style="left:1756.90px;top:560px;height:18px;line-height:18px;font-size:12px;color:#ccccdc;letter-spacing:0.687px;">sdc-r</div>
<div class="t" style="left:1280.30px;top:581px;height:18px;line-height:18px;font-size:12px;color:#ccccdc;letter-spacing:0.712px;">sdd-r</div>
<div class="t" style="left:1356.10px;top:581px;height:18px;line-height:18px;font-size:12px;color:#ccccdc;letter-spacing:0.572px;">sde-r</div>
<div class="t" style="left:1431.60px;top:581px;height:18px;line-height:18px;font-size:12px;color:#ccccdc;letter-spacing:0.620px;">sdf-r</div>
<div class="t" style="left:1503.70px;top:581px;height:18px;line-height:18px;font-size:12px;color:#ccccdc;letter-spacing:0.778px;">sda-w</div>
<div class="t" style="left:1584.20px;top:581px;height:18px;line-height:18px;font-size:12px;color:#ccccdc;letter-spacing:0.632px;">sda-r</div>
<div class="t" style="left:48.33px;top:660px;height:18px;line-height:18px;font-size:12px;color:#ccccdc;letter-spacing:0.450px;">1</div>
<div class="t" style="left:23.17px;top:702px;height:18px;line-height:18px;font-size:12px;color:#ccccdc;letter-spacing:0.450px;">0.500</div>
<div class="t" style="left:48.33px;top:744px;height:18px;line-height:18px;font-size:12px;color:#ccccdc;letter-spacing:0.450px;">0</div>
<div class="t" style="left:18.72px;top:786px;height:18px;line-height:18px;font-size:12px;color:#ccccdc;letter-spacing:0.450px;">-0.500</div>
<div class="t" style="left:43.88px;top:828px;height:18px;line-height:18px;font-size:12px;color:#ccccdc;letter-spacing:0.450px;">-1</div>
<div class="t" style="left:90.70px;top:843px;height:18px;line-height:18px;font-size:12px;color:#ccccdc;letter-spacing:0.222px;">08:11:30</div>
<div class="t" style="left:151.70px;top:843px;height:18px;line-height:18px;font-size:12px;color:#ccccdc;letter-spacing:0.111px;">08:12:00</div>
<div class="t" style="left:213.70px;top:843px;height:18px;line-height:18px;font-size:12px;color:#ccccdc;letter-spacing:0.111px;">08:12:30</div>
<div class="t" style="left:274.70px;top:843px;height:18px;line-height:18px;font-size:12px;color:#ccccdc;letter-spacing:0.111px;">08:13:00</div>
<div class="t" style="left:336.70px;top:843px;height:18px;line-height:18px;font-size:12px;color:#ccccdc;letter-spacing:0.111px;">08:13:30</div>
<div class="t" style="left:398.70px;top:843px;height:18px;line-height:18px;font-size:12px;color:#ccccdc;letter-spacing:0.111px;">08:14:00</div>
<div class="t" style="left:459.70px;top:843px;height:18px;line-height:18px;font-size:12px;color:#ccccdc;letter-spacing:0.111px;">08:14:30</div>
<div class="t" style="left:521.70px;top:843px;height:18px;line-height:18px;font-size:12px;color:#ccccdc;letter-spacing:0.111px;">08:15:00</div>
<div class="t" style="left:283.00px;top:721px;height:21px;line-height:21px;font-size:14px;color:#ccccdc;letter-spacing:0.566px;">No data</div>
<div class="t" style="left:629.19px;top:658px;height:18px;line-height:18px;font-size:12px;color:#ccccdc;letter-spacing:0.600px;">5 Mb/s</div>
<div class="t" style="left:629.19px;top:702px;height:18px;line-height:18px;font-size:12px;color:#ccccdc;letter-spacing:0.600px;">4 Mb/s</div>
<div class="t" style="left:629.19px;top:747px;height:18px;line-height:18px;font-size:12px;color:#ccccdc;letter-spacing:0.600px;">3 Mb/s</div>
<div class="t" style="left:629.19px;top:791px;height:18px;line-height:18px;font-size:12px;color:#ccccdc;letter-spacing:0.600px;">2 Mb/s</div>
<div class="t" style="left:772.25px;top:828px;height:18px;line-height:18px;font-size:12px;color:#ccccdc;letter-spacing:0.474px;">08:12:00</div>
<div class="t" style="left:898.35px;top:828px;height:18px;line-height:18px;font-size:12px;color:#ccccdc;letter-spacing:0.474px;">08:13:00</div>
<div class="t" style="left:1024.15px;top:828px;height:18px;line-height:18px;font-size:12px;color:#ccccdc;letter-spacing:0.474px;">08:14:00</div>
<div class="t" style="left:1151.25px;top:828px;height:18px;line-height:18px;font-size:12px;color:#ccccdc;letter-spacing:0.474px;">08:15:00</div>
<div class="t" style="left:655.10px;top:848px;height:18px;line-height:18px;font-size:12px;color:#ccccdc;letter-spacing:0.430px;">recieved</div>
<div class="t" style="left:736.50px;top:848px;height:18px;line-height:18px;font-size:12px;color:#ccccdc;letter-spacing:0.555px;">sent</div>
<div class="t" style="left:1242.76px;top:660px;height:18px;line-height:18px;font-size:12px;color:#ccccdc;letter-spacing:-0.600px;">4%</div>
<div class="t" style="left:1242.76px;top:697px;height:18px;line-height:18px;font-size:12px;color:#ccccdc;letter-spacing:-0.600px;">3%</div>
<div class="t" style="left:1242.76px;top:733px;height:18px;line-height:18px;font-size:12px;color:#ccccdc;letter-spacing:-0.600px;">2%</div>
<div class="t" style="left:1242.76px;top:770px;height:18px;line-height:18px;font-size:12px;color:#ccccdc;letter-spacing:-0.600px;">1%</div>
<div class="t" style="left:1242.76px;top:807px;height:18px;line-height:18px;font-size:12px;color:#ccccdc;letter-spacing:-0.600px;">0%</div>
<div class="t" style="left:1299.70px;top:822px;height:18px;line-height:18px;font-size:12px;color:#ccccdc;letter-spacing:0.222px;">08:11:30</div>
<div class="t" style="left:1363.70px;top:822px;height:18px;line-height:18px;font-size:12px;color:#ccccdc;letter-spacing:0.111px;">08:12:00</div>
<div class="t" style="left:1427.70px;top:822px;height:18px;line-height:18px;font-size:12px;color:#ccccdc;letter-spacing:0.111px;">08:12:30</div>
<div class="t" style="left:1491.70px;top:822px;height:18px;line-height:18px;font-size:12px;color:#ccccdc;letter-spacing:0.111px;">08:13:00</div>
<div class="t" style="left:1554.70px;top:822px;height:18px;line-height:18px;font-size:12px;color:#ccccdc;letter-spacing:0.111px;">08:13:30</div>
<div class="t" style="left:1618.70px;top:822px;height:18px;line-height:18px;font-size:12px;color:#ccccdc;letter-spacing:0.111px;">08:14:00</div>
<div class="t" style="left:1682.70px;top:822px;height:18px;line-height:18px;font-size:12px;color:#ccccdc;letter-spacing:0.111px;">08:14:30</div>
<div class="t" style="left:1746.70px;top:822px;height:18px;line-height:18px;font-size:12px;color:#ccccdc;letter-spacing:0.111px;">08:15:00</div>
<div class="t" style="left:1280.30px;top:847px;height:18px;line-height:18px;font-size:12px;color:#ccccdc;letter-spacing:0.284px;">sda</div>
<div class="t" style="left:1345.10px;top:847px;height:18px;line-height:18px;font-size:12px;color:#ccccdc;letter-spacing:0.451px;">sdb</div>
<div class="t" style="left:1410.40px;top:847px;height:18px;line-height:18px;font-size:12px;color:#ccccdc;letter-spacing:0.509px;">sdc</div>
<div class="t" style="left:1475.50px;top:847px;height:18px;line-height:18px;font-size:12px;color:#ccccdc;letter-spacing:0.484px;">sdd</div>
<div class="t" style="left:1540.90px;top:847px;height:18px;line-height:18px;font-size:12px;color:#ccccdc;letter-spacing:0.384px;">sde</div>
<div class="t" style="left:1606.30px;top:847px;height:18px;line-height:18px;font-size:12px;color:#ccccdc;letter-spacing:0.484px;">sdg</div>
<div class="t" style="left:1671.30px;top:847px;height:18px;line-height:18px;font-size:12px;color:#ccccdc;letter-spacing:0.484px;">sdh</div>
</div>
</body></html>
